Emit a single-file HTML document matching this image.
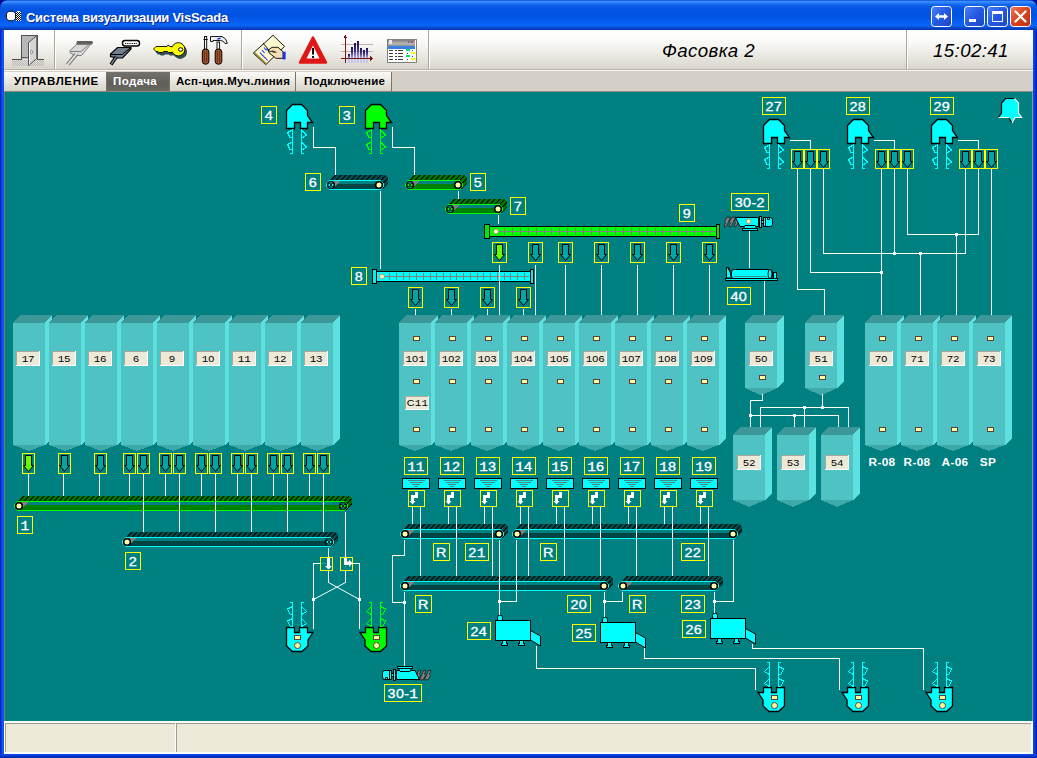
<!DOCTYPE html>
<html><head><meta charset="utf-8"><title>VisScada</title>
<style>
html,body{margin:0;padding:0;}
body{width:1037px;height:758px;overflow:hidden;position:relative;background:#00098c;font-family:"Liberation Sans",sans-serif;}
.abs{position:absolute;}
#title{left:0;top:0;width:1037px;height:30px;border-radius:8px 8px 0 0;
 background:linear-gradient(to bottom,#0a4ad8 0px,#3a8cfc 1.5px,#2a7cf6 3px,#1468ee 4.5px,#0a5ce6 6.5px,#0254e2 9px,#0052e0 16px,#065cf0 21px,#0a66f8 25px,#0856e0 27px,#0846c8 28px,#0638b0 30px);}
#title .t{position:absolute;left:26px;top:10px;color:#fff;font-weight:bold;font-size:13px;line-height:16px;letter-spacing:-0.27px;text-shadow:1px 1px 0 #0a2a90;white-space:nowrap;}
#lb{left:0;top:30px;width:4px;height:728px;background:linear-gradient(to right,#0019cf 0,#0831d9 1px,#1660ee 3px,#0848d8 4px);}
#rb{left:1033px;top:30px;width:4px;height:728px;background:linear-gradient(to right,#0a50e0 0,#0838d8 2px,#001ea0 4px);}
#bb{left:0;top:754px;width:1037px;height:4px;background:linear-gradient(to bottom,#0a50e0 0,#0838d8 2px,#001ea0 4px);}
#tool{left:4px;top:30px;width:1029px;height:40px;background:linear-gradient(to bottom,#ffffff 0%,#fbfbf9 25%,#efeee9 55%,#e1ded6 85%,#d7d4cb 100%);border-bottom:1px solid #b9b4a2;box-sizing:border-box;}
#tabs{left:4px;top:70px;width:1029px;height:22px;background:#d4d0c8;border-top:1px solid #fbfaf6;border-bottom:1px solid #8e8a80;box-sizing:border-box;}
#teal{left:4px;top:92px;width:1029px;height:629px;background:#008080;border-left:1px solid #707870;border-right:1px solid #909890;box-sizing:border-box;}
#status{left:4px;top:721px;width:1029px;height:33px;background:#fff;}
#status div{position:absolute;top:2px;height:29px;background:#ece9d8;border-top:1px solid #9d9d8f;border-left:1px solid #9d9d8f;box-sizing:border-box;}
.tab{position:absolute;top:72px;height:20px;font-weight:bold;font-size:11.5px;line-height:18px;color:#000;white-space:nowrap;box-sizing:border-box;
 background:linear-gradient(to bottom,#fbfaf7 0%,#ebe9e1 45%,#d6d3c7 100%);border-right:1px solid #77756a;border-bottom:1px solid #8a887c;}
.tab span{position:absolute;top:0;}
.sep{position:absolute;top:0;width:1px;height:39px;background:#aca899;border-right:1px solid #fff;}
svg text.lb .m{font-family:"Liberation Mono",monospace;}
svg text.lb .s{font-family:"Liberation Sans",sans-serif;letter-spacing:0.25px;}
svg text.tg .m{font-family:"Liberation Mono",monospace;}
svg text.tg .s{font-family:"Liberation Sans",sans-serif;letter-spacing:0.3px;}
svg text.sb{font-family:"Liberation Sans",sans-serif;font-weight:bold;}
.it{position:absolute;font-style:italic;font-size:18.67px;line-height:22px;color:#000;white-space:nowrap;letter-spacing:0.4px;}
</style></head><body>
<div id="title" class="abs"><div class="t">Система визуализации VisScada</div></div>
<div id="lb" class="abs"></div><div id="rb" class="abs"></div><div id="bb" class="abs"></div>
<div id="tool" class="abs">
 <div class="sep" style="left:50px"></div>
 <div class="sep" style="left:237px"></div>
 <div class="sep" style="left:424px"></div>
 <div class="sep" style="left:902px"></div>
 <div class="it" style="left:658px;top:10px">Фасовка 2</div>
 <div class="it" style="left:929px;top:10px">15:02:41</div>
</div>
<div id="tabs" class="abs"></div>
<div class="tab abs" style="left:4px;width:103px"><span style="left:10px;letter-spacing:0.65px">УПРАВЛЕНИЕ</span></div>
<div class="tab abs" style="left:107px;width:63px;color:#fff;background:linear-gradient(to bottom,#74726c,#605e58 60%,#6a6862)"><span style="left:6px;letter-spacing:0.4px">Подача</span></div>
<div class="tab abs" style="left:170px;width:126px"><span style="left:6px;letter-spacing:0.22px">Асп-ция.Муч.линия</span></div>
<div class="tab abs" style="left:296px;width:96px"><span style="left:8px;letter-spacing:0.25px">Подключение</span></div>
<div id="teal" class="abs"></div>
<div id="status" class="abs"><div style="left:1px;width:170px"></div><div style="left:172px;width:855px"></div></div>
<svg class="abs" style="left:0;top:0" width="1037" height="758" viewBox="0 0 1037 758" shape-rendering="crispEdges">
<polygon points="45,323 52,315 52,438 45,445" fill="#5ce0e0" />
<polygon points="13,323 20,315 52,315 45,323" fill="#3c9898" />
<rect x="13" y="323" width="32" height="122" fill="#4fc3c3" />
<polygon points="13,445 45,445 29.0,451" fill="#3fa8a8" />
<polygon points="81,323 88,315 88,438 81,445" fill="#5ce0e0" />
<polygon points="49,323 56,315 88,315 81,323" fill="#3c9898" />
<rect x="49" y="323" width="32" height="122" fill="#4fc3c3" />
<polygon points="49,445 81,445 65.0,451" fill="#3fa8a8" />
<polygon points="117,323 124,315 124,438 117,445" fill="#5ce0e0" />
<polygon points="85,323 92,315 124,315 117,323" fill="#3c9898" />
<rect x="85" y="323" width="32" height="122" fill="#4fc3c3" />
<polygon points="85,445 117,445 101.0,451" fill="#3fa8a8" />
<polygon points="153,323 160,315 160,438 153,445" fill="#5ce0e0" />
<polygon points="121,323 128,315 160,315 153,323" fill="#3c9898" />
<rect x="121" y="323" width="32" height="122" fill="#4fc3c3" />
<polygon points="121,445 153,445 137.0,451" fill="#3fa8a8" />
<polygon points="189,323 196,315 196,438 189,445" fill="#5ce0e0" />
<polygon points="157,323 164,315 196,315 189,323" fill="#3c9898" />
<rect x="157" y="323" width="32" height="122" fill="#4fc3c3" />
<polygon points="157,445 189,445 173.0,451" fill="#3fa8a8" />
<polygon points="225,323 232,315 232,438 225,445" fill="#5ce0e0" />
<polygon points="193,323 200,315 232,315 225,323" fill="#3c9898" />
<rect x="193" y="323" width="32" height="122" fill="#4fc3c3" />
<polygon points="193,445 225,445 209.0,451" fill="#3fa8a8" />
<polygon points="261,323 268,315 268,438 261,445" fill="#5ce0e0" />
<polygon points="229,323 236,315 268,315 261,323" fill="#3c9898" />
<rect x="229" y="323" width="32" height="122" fill="#4fc3c3" />
<polygon points="229,445 261,445 245.0,451" fill="#3fa8a8" />
<polygon points="297,323 304,315 304,438 297,445" fill="#5ce0e0" />
<polygon points="265,323 272,315 304,315 297,323" fill="#3c9898" />
<rect x="265" y="323" width="32" height="122" fill="#4fc3c3" />
<polygon points="265,445 297,445 281.0,451" fill="#3fa8a8" />
<polygon points="333,323 340,315 340,438 333,445" fill="#5ce0e0" />
<polygon points="301,323 308,315 340,315 333,323" fill="#3c9898" />
<rect x="301" y="323" width="32" height="122" fill="#4fc3c3" />
<polygon points="301,445 333,445 317.0,451" fill="#3fa8a8" />
<rect x="16" y="351" width="24" height="15" fill="#ece9d8" />
<rect x="16" y="351" width="24" height="1" fill="#aca899"/>
<rect x="16" y="351" width="1" height="15" fill="#aca899"/>
<rect x="16" y="365" width="24" height="1" fill="#ffffff"/>
<rect x="39" y="351" width="1" height="15" fill="#ffffff"/>
<text transform="translate(28.3,362) scale(1.13,1)" font-size="9.6" fill="#000" text-anchor="middle" class="tg"><tspan class="m">1</tspan><tspan class="s">7</tspan></text>
<rect x="52" y="351" width="24" height="15" fill="#ece9d8" />
<rect x="52" y="351" width="24" height="1" fill="#aca899"/>
<rect x="52" y="351" width="1" height="15" fill="#aca899"/>
<rect x="52" y="365" width="24" height="1" fill="#ffffff"/>
<rect x="75" y="351" width="1" height="15" fill="#ffffff"/>
<text transform="translate(64.3,362) scale(1.13,1)" font-size="9.6" fill="#000" text-anchor="middle" class="tg"><tspan class="m">1</tspan><tspan class="s">5</tspan></text>
<rect x="88" y="351" width="24" height="15" fill="#ece9d8" />
<rect x="88" y="351" width="24" height="1" fill="#aca899"/>
<rect x="88" y="351" width="1" height="15" fill="#aca899"/>
<rect x="88" y="365" width="24" height="1" fill="#ffffff"/>
<rect x="111" y="351" width="1" height="15" fill="#ffffff"/>
<text transform="translate(100.3,362) scale(1.13,1)" font-size="9.6" fill="#000" text-anchor="middle" class="tg"><tspan class="m">1</tspan><tspan class="s">6</tspan></text>
<rect x="124" y="351" width="24" height="15" fill="#ece9d8" />
<rect x="124" y="351" width="24" height="1" fill="#aca899"/>
<rect x="124" y="351" width="1" height="15" fill="#aca899"/>
<rect x="124" y="365" width="24" height="1" fill="#ffffff"/>
<rect x="147" y="351" width="1" height="15" fill="#ffffff"/>
<text transform="translate(136.3,362) scale(1.13,1)" font-size="9.6" fill="#000" text-anchor="middle" class="tg"><tspan class="s">6</tspan></text>
<rect x="160" y="351" width="24" height="15" fill="#ece9d8" />
<rect x="160" y="351" width="24" height="1" fill="#aca899"/>
<rect x="160" y="351" width="1" height="15" fill="#aca899"/>
<rect x="160" y="365" width="24" height="1" fill="#ffffff"/>
<rect x="183" y="351" width="1" height="15" fill="#ffffff"/>
<text transform="translate(172.3,362) scale(1.13,1)" font-size="9.6" fill="#000" text-anchor="middle" class="tg"><tspan class="s">9</tspan></text>
<rect x="196" y="351" width="24" height="15" fill="#ece9d8" />
<rect x="196" y="351" width="24" height="1" fill="#aca899"/>
<rect x="196" y="351" width="1" height="15" fill="#aca899"/>
<rect x="196" y="365" width="24" height="1" fill="#ffffff"/>
<rect x="219" y="351" width="1" height="15" fill="#ffffff"/>
<text transform="translate(208.3,362) scale(1.13,1)" font-size="9.6" fill="#000" text-anchor="middle" class="tg"><tspan class="m">1</tspan><tspan class="s">0</tspan></text>
<rect x="232" y="351" width="24" height="15" fill="#ece9d8" />
<rect x="232" y="351" width="24" height="1" fill="#aca899"/>
<rect x="232" y="351" width="1" height="15" fill="#aca899"/>
<rect x="232" y="365" width="24" height="1" fill="#ffffff"/>
<rect x="255" y="351" width="1" height="15" fill="#ffffff"/>
<text transform="translate(244.3,362) scale(1.13,1)" font-size="9.6" fill="#000" text-anchor="middle" class="tg"><tspan class="m">1</tspan><tspan class="m">1</tspan></text>
<rect x="268" y="351" width="24" height="15" fill="#ece9d8" />
<rect x="268" y="351" width="24" height="1" fill="#aca899"/>
<rect x="268" y="351" width="1" height="15" fill="#aca899"/>
<rect x="268" y="365" width="24" height="1" fill="#ffffff"/>
<rect x="291" y="351" width="1" height="15" fill="#ffffff"/>
<text transform="translate(280.3,362) scale(1.13,1)" font-size="9.6" fill="#000" text-anchor="middle" class="tg"><tspan class="m">1</tspan><tspan class="s">2</tspan></text>
<rect x="304" y="351" width="24" height="15" fill="#ece9d8" />
<rect x="304" y="351" width="24" height="1" fill="#aca899"/>
<rect x="304" y="351" width="1" height="15" fill="#aca899"/>
<rect x="304" y="365" width="24" height="1" fill="#ffffff"/>
<rect x="327" y="351" width="1" height="15" fill="#ffffff"/>
<text transform="translate(316.3,362) scale(1.13,1)" font-size="9.6" fill="#000" text-anchor="middle" class="tg"><tspan class="m">1</tspan><tspan class="s">3</tspan></text>
<polygon points="431,323 438,315 438,438 431,445" fill="#5ce0e0" />
<polygon points="399,323 406,315 438,315 431,323" fill="#3c9898" />
<rect x="399" y="323" width="32" height="122" fill="#4fc3c3" />
<polygon points="399,445 431,445 415.0,451" fill="#3fa8a8" />
<polygon points="467,323 474,315 474,438 467,445" fill="#5ce0e0" />
<polygon points="435,323 442,315 474,315 467,323" fill="#3c9898" />
<rect x="435" y="323" width="32" height="122" fill="#4fc3c3" />
<polygon points="435,445 467,445 451.0,451" fill="#3fa8a8" />
<polygon points="503,323 510,315 510,438 503,445" fill="#5ce0e0" />
<polygon points="471,323 478,315 510,315 503,323" fill="#3c9898" />
<rect x="471" y="323" width="32" height="122" fill="#4fc3c3" />
<polygon points="471,445 503,445 487.0,451" fill="#3fa8a8" />
<polygon points="539,323 546,315 546,438 539,445" fill="#5ce0e0" />
<polygon points="507,323 514,315 546,315 539,323" fill="#3c9898" />
<rect x="507" y="323" width="32" height="122" fill="#4fc3c3" />
<polygon points="507,445 539,445 523.0,451" fill="#3fa8a8" />
<polygon points="575,323 582,315 582,438 575,445" fill="#5ce0e0" />
<polygon points="543,323 550,315 582,315 575,323" fill="#3c9898" />
<rect x="543" y="323" width="32" height="122" fill="#4fc3c3" />
<polygon points="543,445 575,445 559.0,451" fill="#3fa8a8" />
<polygon points="611,323 618,315 618,438 611,445" fill="#5ce0e0" />
<polygon points="579,323 586,315 618,315 611,323" fill="#3c9898" />
<rect x="579" y="323" width="32" height="122" fill="#4fc3c3" />
<polygon points="579,445 611,445 595.0,451" fill="#3fa8a8" />
<polygon points="647,323 654,315 654,438 647,445" fill="#5ce0e0" />
<polygon points="615,323 622,315 654,315 647,323" fill="#3c9898" />
<rect x="615" y="323" width="32" height="122" fill="#4fc3c3" />
<polygon points="615,445 647,445 631.0,451" fill="#3fa8a8" />
<polygon points="683,323 690,315 690,438 683,445" fill="#5ce0e0" />
<polygon points="651,323 658,315 690,315 683,323" fill="#3c9898" />
<rect x="651" y="323" width="32" height="122" fill="#4fc3c3" />
<polygon points="651,445 683,445 667.0,451" fill="#3fa8a8" />
<polygon points="719,323 726,315 726,438 719,445" fill="#5ce0e0" />
<polygon points="687,323 694,315 726,315 719,323" fill="#3c9898" />
<rect x="687" y="323" width="32" height="122" fill="#4fc3c3" />
<polygon points="687,445 719,445 703.0,451" fill="#3fa8a8" />
<rect x="403" y="351" width="24" height="15" fill="#ece9d8" />
<rect x="403" y="351" width="24" height="1" fill="#aca899"/>
<rect x="403" y="351" width="1" height="15" fill="#aca899"/>
<rect x="403" y="365" width="24" height="1" fill="#ffffff"/>
<rect x="426" y="351" width="1" height="15" fill="#ffffff"/>
<text transform="translate(415.3,362) scale(1.13,1)" font-size="9.6" fill="#000" text-anchor="middle" class="tg"><tspan class="m">1</tspan><tspan class="s">0</tspan><tspan class="m">1</tspan></text>
<rect x="413.5" y="336.5" width="6" height="4" fill="#ffff99" stroke="#5a4040" />
<rect x="413.5" y="379.5" width="6" height="4" fill="#ffff99" stroke="#5a4040" />
<rect x="413.5" y="427.5" width="6" height="4" fill="#ffff99" stroke="#5a4040" />
<rect x="439" y="351" width="24" height="15" fill="#ece9d8" />
<rect x="439" y="351" width="24" height="1" fill="#aca899"/>
<rect x="439" y="351" width="1" height="15" fill="#aca899"/>
<rect x="439" y="365" width="24" height="1" fill="#ffffff"/>
<rect x="462" y="351" width="1" height="15" fill="#ffffff"/>
<text transform="translate(451.3,362) scale(1.13,1)" font-size="9.6" fill="#000" text-anchor="middle" class="tg"><tspan class="m">1</tspan><tspan class="s">0</tspan><tspan class="s">2</tspan></text>
<rect x="449.5" y="336.5" width="6" height="4" fill="#ffff99" stroke="#5a4040" />
<rect x="449.5" y="379.5" width="6" height="4" fill="#ffff99" stroke="#5a4040" />
<rect x="449.5" y="427.5" width="6" height="4" fill="#ffff99" stroke="#5a4040" />
<rect x="475" y="351" width="24" height="15" fill="#ece9d8" />
<rect x="475" y="351" width="24" height="1" fill="#aca899"/>
<rect x="475" y="351" width="1" height="15" fill="#aca899"/>
<rect x="475" y="365" width="24" height="1" fill="#ffffff"/>
<rect x="498" y="351" width="1" height="15" fill="#ffffff"/>
<text transform="translate(487.3,362) scale(1.13,1)" font-size="9.6" fill="#000" text-anchor="middle" class="tg"><tspan class="m">1</tspan><tspan class="s">0</tspan><tspan class="s">3</tspan></text>
<rect x="485.5" y="336.5" width="6" height="4" fill="#ffff99" stroke="#5a4040" />
<rect x="485.5" y="379.5" width="6" height="4" fill="#ffff99" stroke="#5a4040" />
<rect x="485.5" y="427.5" width="6" height="4" fill="#ffff99" stroke="#5a4040" />
<rect x="511" y="351" width="24" height="15" fill="#ece9d8" />
<rect x="511" y="351" width="24" height="1" fill="#aca899"/>
<rect x="511" y="351" width="1" height="15" fill="#aca899"/>
<rect x="511" y="365" width="24" height="1" fill="#ffffff"/>
<rect x="534" y="351" width="1" height="15" fill="#ffffff"/>
<text transform="translate(523.3,362) scale(1.13,1)" font-size="9.6" fill="#000" text-anchor="middle" class="tg"><tspan class="m">1</tspan><tspan class="s">0</tspan><tspan class="s">4</tspan></text>
<rect x="521.5" y="336.5" width="6" height="4" fill="#ffff99" stroke="#5a4040" />
<rect x="521.5" y="379.5" width="6" height="4" fill="#ffff99" stroke="#5a4040" />
<rect x="521.5" y="427.5" width="6" height="4" fill="#ffff99" stroke="#5a4040" />
<rect x="547" y="351" width="24" height="15" fill="#ece9d8" />
<rect x="547" y="351" width="24" height="1" fill="#aca899"/>
<rect x="547" y="351" width="1" height="15" fill="#aca899"/>
<rect x="547" y="365" width="24" height="1" fill="#ffffff"/>
<rect x="570" y="351" width="1" height="15" fill="#ffffff"/>
<text transform="translate(559.3,362) scale(1.13,1)" font-size="9.6" fill="#000" text-anchor="middle" class="tg"><tspan class="m">1</tspan><tspan class="s">0</tspan><tspan class="s">5</tspan></text>
<rect x="557.5" y="336.5" width="6" height="4" fill="#ffff99" stroke="#5a4040" />
<rect x="557.5" y="379.5" width="6" height="4" fill="#ffff99" stroke="#5a4040" />
<rect x="557.5" y="427.5" width="6" height="4" fill="#ffff99" stroke="#5a4040" />
<rect x="583" y="351" width="24" height="15" fill="#ece9d8" />
<rect x="583" y="351" width="24" height="1" fill="#aca899"/>
<rect x="583" y="351" width="1" height="15" fill="#aca899"/>
<rect x="583" y="365" width="24" height="1" fill="#ffffff"/>
<rect x="606" y="351" width="1" height="15" fill="#ffffff"/>
<text transform="translate(595.3,362) scale(1.13,1)" font-size="9.6" fill="#000" text-anchor="middle" class="tg"><tspan class="m">1</tspan><tspan class="s">0</tspan><tspan class="s">6</tspan></text>
<rect x="593.5" y="336.5" width="6" height="4" fill="#ffff99" stroke="#5a4040" />
<rect x="593.5" y="379.5" width="6" height="4" fill="#ffff99" stroke="#5a4040" />
<rect x="593.5" y="427.5" width="6" height="4" fill="#ffff99" stroke="#5a4040" />
<rect x="619" y="351" width="24" height="15" fill="#ece9d8" />
<rect x="619" y="351" width="24" height="1" fill="#aca899"/>
<rect x="619" y="351" width="1" height="15" fill="#aca899"/>
<rect x="619" y="365" width="24" height="1" fill="#ffffff"/>
<rect x="642" y="351" width="1" height="15" fill="#ffffff"/>
<text transform="translate(631.3,362) scale(1.13,1)" font-size="9.6" fill="#000" text-anchor="middle" class="tg"><tspan class="m">1</tspan><tspan class="s">0</tspan><tspan class="s">7</tspan></text>
<rect x="629.5" y="336.5" width="6" height="4" fill="#ffff99" stroke="#5a4040" />
<rect x="629.5" y="379.5" width="6" height="4" fill="#ffff99" stroke="#5a4040" />
<rect x="629.5" y="427.5" width="6" height="4" fill="#ffff99" stroke="#5a4040" />
<rect x="655" y="351" width="24" height="15" fill="#ece9d8" />
<rect x="655" y="351" width="24" height="1" fill="#aca899"/>
<rect x="655" y="351" width="1" height="15" fill="#aca899"/>
<rect x="655" y="365" width="24" height="1" fill="#ffffff"/>
<rect x="678" y="351" width="1" height="15" fill="#ffffff"/>
<text transform="translate(667.3,362) scale(1.13,1)" font-size="9.6" fill="#000" text-anchor="middle" class="tg"><tspan class="m">1</tspan><tspan class="s">0</tspan><tspan class="s">8</tspan></text>
<rect x="665.5" y="336.5" width="6" height="4" fill="#ffff99" stroke="#5a4040" />
<rect x="665.5" y="379.5" width="6" height="4" fill="#ffff99" stroke="#5a4040" />
<rect x="665.5" y="427.5" width="6" height="4" fill="#ffff99" stroke="#5a4040" />
<rect x="691" y="351" width="24" height="15" fill="#ece9d8" />
<rect x="691" y="351" width="24" height="1" fill="#aca899"/>
<rect x="691" y="351" width="1" height="15" fill="#aca899"/>
<rect x="691" y="365" width="24" height="1" fill="#ffffff"/>
<rect x="714" y="351" width="1" height="15" fill="#ffffff"/>
<text transform="translate(703.3,362) scale(1.13,1)" font-size="9.6" fill="#000" text-anchor="middle" class="tg"><tspan class="m">1</tspan><tspan class="s">0</tspan><tspan class="s">9</tspan></text>
<rect x="701.5" y="336.5" width="6" height="4" fill="#ffff99" stroke="#5a4040" />
<rect x="701.5" y="379.5" width="6" height="4" fill="#ffff99" stroke="#5a4040" />
<rect x="701.5" y="427.5" width="6" height="4" fill="#ffff99" stroke="#5a4040" />
<rect x="405" y="396" width="24" height="14" fill="#ece9d8" />
<rect x="405" y="396" width="24" height="1" fill="#aca899"/>
<rect x="405" y="396" width="1" height="14" fill="#aca899"/>
<rect x="405" y="409" width="24" height="1" fill="#ffffff"/>
<rect x="428" y="396" width="1" height="14" fill="#ffffff"/>
<text transform="translate(417.3,406) scale(1.13,1)" font-size="9.6" fill="#000" text-anchor="middle" class="tg"><tspan class="s">C</tspan><tspan class="m">1</tspan><tspan class="m">1</tspan></text>
<polygon points="777,323 784,315 784,381 777,388" fill="#5ce0e0" />
<polygon points="745,323 752,315 784,315 777,323" fill="#3c9898" />
<rect x="745" y="323" width="32" height="65" fill="#4fc3c3" />
<polygon points="745,388 777,388 761.0,395.5" fill="#3fa8a8" />
<polygon points="837,323 844,315 844,381 837,388" fill="#5ce0e0" />
<polygon points="805,323 812,315 844,315 837,323" fill="#3c9898" />
<rect x="805" y="323" width="32" height="65" fill="#4fc3c3" />
<polygon points="805,388 837,388 821.0,395.5" fill="#3fa8a8" />
<rect x="749" y="351" width="24" height="15" fill="#ece9d8" />
<rect x="749" y="351" width="24" height="1" fill="#aca899"/>
<rect x="749" y="351" width="1" height="15" fill="#aca899"/>
<rect x="749" y="365" width="24" height="1" fill="#ffffff"/>
<rect x="772" y="351" width="1" height="15" fill="#ffffff"/>
<text transform="translate(761.3,362) scale(1.13,1)" font-size="9.6" fill="#000" text-anchor="middle" class="tg"><tspan class="s">5</tspan><tspan class="s">0</tspan></text>
<rect x="759.5" y="336.5" width="6" height="4" fill="#ffff99" stroke="#5a4040" />
<rect x="759.5" y="375.5" width="6" height="4" fill="#ffff99" stroke="#5a4040" />
<rect x="809" y="351" width="24" height="15" fill="#ece9d8" />
<rect x="809" y="351" width="24" height="1" fill="#aca899"/>
<rect x="809" y="351" width="1" height="15" fill="#aca899"/>
<rect x="809" y="365" width="24" height="1" fill="#ffffff"/>
<rect x="832" y="351" width="1" height="15" fill="#ffffff"/>
<text transform="translate(821.3,362) scale(1.13,1)" font-size="9.6" fill="#000" text-anchor="middle" class="tg"><tspan class="s">5</tspan><tspan class="m">1</tspan></text>
<rect x="819.5" y="336.5" width="6" height="4" fill="#ffff99" stroke="#5a4040" />
<rect x="819.5" y="375.5" width="6" height="4" fill="#ffff99" stroke="#5a4040" />
<polygon points="765,435 772,427 772,493 765,500" fill="#5ce0e0" />
<polygon points="733,435 740,427 772,427 765,435" fill="#3c9898" />
<rect x="733" y="435" width="32" height="65" fill="#4fc3c3" />
<polygon points="733,500 765,500 749.0,507" fill="#3fa8a8" />
<rect x="737" y="455" width="24" height="15" fill="#ece9d8" />
<rect x="737" y="455" width="24" height="1" fill="#aca899"/>
<rect x="737" y="455" width="1" height="15" fill="#aca899"/>
<rect x="737" y="469" width="24" height="1" fill="#ffffff"/>
<rect x="760" y="455" width="1" height="15" fill="#ffffff"/>
<text transform="translate(749.3,466) scale(1.13,1)" font-size="9.6" fill="#000" text-anchor="middle" class="tg"><tspan class="s">5</tspan><tspan class="s">2</tspan></text>
<polygon points="809,435 816,427 816,493 809,500" fill="#5ce0e0" />
<polygon points="777,435 784,427 816,427 809,435" fill="#3c9898" />
<rect x="777" y="435" width="32" height="65" fill="#4fc3c3" />
<polygon points="777,500 809,500 793.0,507" fill="#3fa8a8" />
<rect x="781" y="455" width="24" height="15" fill="#ece9d8" />
<rect x="781" y="455" width="24" height="1" fill="#aca899"/>
<rect x="781" y="455" width="1" height="15" fill="#aca899"/>
<rect x="781" y="469" width="24" height="1" fill="#ffffff"/>
<rect x="804" y="455" width="1" height="15" fill="#ffffff"/>
<text transform="translate(793.3,466) scale(1.13,1)" font-size="9.6" fill="#000" text-anchor="middle" class="tg"><tspan class="s">5</tspan><tspan class="s">3</tspan></text>
<polygon points="853,435 860,427 860,493 853,500" fill="#5ce0e0" />
<polygon points="821,435 828,427 860,427 853,435" fill="#3c9898" />
<rect x="821" y="435" width="32" height="65" fill="#4fc3c3" />
<polygon points="821,500 853,500 837.0,507" fill="#3fa8a8" />
<rect x="825" y="455" width="24" height="15" fill="#ece9d8" />
<rect x="825" y="455" width="24" height="1" fill="#aca899"/>
<rect x="825" y="455" width="1" height="15" fill="#aca899"/>
<rect x="825" y="469" width="24" height="1" fill="#ffffff"/>
<rect x="848" y="455" width="1" height="15" fill="#ffffff"/>
<text transform="translate(837.3,466) scale(1.13,1)" font-size="9.6" fill="#000" text-anchor="middle" class="tg"><tspan class="s">5</tspan><tspan class="s">4</tspan></text>
<polygon points="897,323 904,315 904,438 897,445" fill="#5ce0e0" />
<polygon points="865,323 872,315 904,315 897,323" fill="#3c9898" />
<rect x="865" y="323" width="32" height="122" fill="#4fc3c3" />
<polygon points="865,445 897,445 881.0,451" fill="#3fa8a8" />
<polygon points="933,323 940,315 940,438 933,445" fill="#5ce0e0" />
<polygon points="901,323 908,315 940,315 933,323" fill="#3c9898" />
<rect x="901" y="323" width="32" height="122" fill="#4fc3c3" />
<polygon points="901,445 933,445 917.0,451" fill="#3fa8a8" />
<polygon points="969,323 976,315 976,438 969,445" fill="#5ce0e0" />
<polygon points="937,323 944,315 976,315 969,323" fill="#3c9898" />
<rect x="937" y="323" width="32" height="122" fill="#4fc3c3" />
<polygon points="937,445 969,445 953.0,451" fill="#3fa8a8" />
<polygon points="1005,323 1012,315 1012,438 1005,445" fill="#5ce0e0" />
<polygon points="973,323 980,315 1012,315 1005,323" fill="#3c9898" />
<rect x="973" y="323" width="32" height="122" fill="#4fc3c3" />
<polygon points="973,445 1005,445 989.0,451" fill="#3fa8a8" />
<rect x="869" y="351" width="24" height="15" fill="#ece9d8" />
<rect x="869" y="351" width="24" height="1" fill="#aca899"/>
<rect x="869" y="351" width="1" height="15" fill="#aca899"/>
<rect x="869" y="365" width="24" height="1" fill="#ffffff"/>
<rect x="892" y="351" width="1" height="15" fill="#ffffff"/>
<text transform="translate(881.3,362) scale(1.13,1)" font-size="9.6" fill="#000" text-anchor="middle" class="tg"><tspan class="s">7</tspan><tspan class="s">0</tspan></text>
<rect x="879.5" y="336.5" width="6" height="4" fill="#ffff99" stroke="#5a4040" />
<rect x="879.5" y="427.5" width="6" height="4" fill="#ffff99" stroke="#5a4040" />
<rect x="905" y="351" width="24" height="15" fill="#ece9d8" />
<rect x="905" y="351" width="24" height="1" fill="#aca899"/>
<rect x="905" y="351" width="1" height="15" fill="#aca899"/>
<rect x="905" y="365" width="24" height="1" fill="#ffffff"/>
<rect x="928" y="351" width="1" height="15" fill="#ffffff"/>
<text transform="translate(917.3,362) scale(1.13,1)" font-size="9.6" fill="#000" text-anchor="middle" class="tg"><tspan class="s">7</tspan><tspan class="m">1</tspan></text>
<rect x="915.5" y="336.5" width="6" height="4" fill="#ffff99" stroke="#5a4040" />
<rect x="915.5" y="427.5" width="6" height="4" fill="#ffff99" stroke="#5a4040" />
<rect x="941" y="351" width="24" height="15" fill="#ece9d8" />
<rect x="941" y="351" width="24" height="1" fill="#aca899"/>
<rect x="941" y="351" width="1" height="15" fill="#aca899"/>
<rect x="941" y="365" width="24" height="1" fill="#ffffff"/>
<rect x="964" y="351" width="1" height="15" fill="#ffffff"/>
<text transform="translate(953.3,362) scale(1.13,1)" font-size="9.6" fill="#000" text-anchor="middle" class="tg"><tspan class="s">7</tspan><tspan class="s">2</tspan></text>
<rect x="951.5" y="336.5" width="6" height="4" fill="#ffff99" stroke="#5a4040" />
<rect x="951.5" y="427.5" width="6" height="4" fill="#ffff99" stroke="#5a4040" />
<rect x="977" y="351" width="24" height="15" fill="#ece9d8" />
<rect x="977" y="351" width="24" height="1" fill="#aca899"/>
<rect x="977" y="351" width="1" height="15" fill="#aca899"/>
<rect x="977" y="365" width="24" height="1" fill="#ffffff"/>
<rect x="1000" y="351" width="1" height="15" fill="#ffffff"/>
<text transform="translate(989.3,362) scale(1.13,1)" font-size="9.6" fill="#000" text-anchor="middle" class="tg"><tspan class="s">7</tspan><tspan class="s">3</tspan></text>
<rect x="987.5" y="336.5" width="6" height="4" fill="#ffff99" stroke="#5a4040" />
<rect x="987.5" y="427.5" width="6" height="4" fill="#ffff99" stroke="#5a4040" />
<text x="882" y="466" font-size="11.8" fill="#fff" text-anchor="middle" class="sb" letter-spacing="0.3">R-08</text>
<text x="917" y="466" font-size="11.8" fill="#fff" text-anchor="middle" class="sb" letter-spacing="0.3">R-08</text>
<text x="955" y="466" font-size="11.8" fill="#fff" text-anchor="middle" class="sb" letter-spacing="0.3">A-06</text>
<text x="988" y="466" font-size="11.8" fill="#fff" text-anchor="middle" class="sb" letter-spacing="0.3">SP</text>
<rect x="492.5" y="242.5" width="14" height="20" fill="none" stroke="#ffff00" />
<polygon points="496.5,244.5 502.5,244.5 502.5,254.5 504.5,254.5 499.5,260.5 494.5,254.5 496.5,254.5" fill="#66ff00" stroke="#000" stroke-width="1" shape-rendering="geometricPrecision"/>
<rect x="528.5" y="242.5" width="14" height="20" fill="none" stroke="#ffff00" />
<polygon points="532.5,244.5 538.5,244.5 538.5,254.5 540.5,254.5 535.5,260.5 530.5,254.5 532.5,254.5" fill="#00a6a6" stroke="#000" stroke-width="1" shape-rendering="geometricPrecision"/>
<rect x="558.5" y="242.5" width="14" height="20" fill="none" stroke="#ffff00" />
<polygon points="562.5,244.5 568.5,244.5 568.5,254.5 570.5,254.5 565.5,260.5 560.5,254.5 562.5,254.5" fill="#00a6a6" stroke="#000" stroke-width="1" shape-rendering="geometricPrecision"/>
<rect x="594.5" y="242.5" width="14" height="20" fill="none" stroke="#ffff00" />
<polygon points="598.5,244.5 604.5,244.5 604.5,254.5 606.5,254.5 601.5,260.5 596.5,254.5 598.5,254.5" fill="#00a6a6" stroke="#000" stroke-width="1" shape-rendering="geometricPrecision"/>
<rect x="630.5" y="242.5" width="14" height="20" fill="none" stroke="#ffff00" />
<polygon points="634.5,244.5 640.5,244.5 640.5,254.5 642.5,254.5 637.5,260.5 632.5,254.5 634.5,254.5" fill="#00a6a6" stroke="#000" stroke-width="1" shape-rendering="geometricPrecision"/>
<rect x="666.5" y="242.5" width="14" height="20" fill="none" stroke="#ffff00" />
<polygon points="670.5,244.5 676.5,244.5 676.5,254.5 678.5,254.5 673.5,260.5 668.5,254.5 670.5,254.5" fill="#00a6a6" stroke="#000" stroke-width="1" shape-rendering="geometricPrecision"/>
<rect x="702.5" y="242.5" width="14" height="20" fill="none" stroke="#ffff00" />
<polygon points="706.5,244.5 712.5,244.5 712.5,254.5 714.5,254.5 709.5,260.5 704.5,254.5 706.5,254.5" fill="#00a6a6" stroke="#000" stroke-width="1" shape-rendering="geometricPrecision"/>
<rect x="408.5" y="287.5" width="14" height="20" fill="none" stroke="#ffff00" />
<polygon points="412.5,289.5 418.5,289.5 418.5,299.5 420.5,299.5 415.5,305.5 410.5,299.5 412.5,299.5" fill="#00a6a6" stroke="#000" stroke-width="1" shape-rendering="geometricPrecision"/>
<rect x="444.5" y="287.5" width="14" height="20" fill="none" stroke="#ffff00" />
<polygon points="448.5,289.5 454.5,289.5 454.5,299.5 456.5,299.5 451.5,305.5 446.5,299.5 448.5,299.5" fill="#00a6a6" stroke="#000" stroke-width="1" shape-rendering="geometricPrecision"/>
<rect x="480.5" y="287.5" width="14" height="20" fill="none" stroke="#ffff00" />
<polygon points="484.5,289.5 490.5,289.5 490.5,299.5 492.5,299.5 487.5,305.5 482.5,299.5 484.5,299.5" fill="#00a6a6" stroke="#000" stroke-width="1" shape-rendering="geometricPrecision"/>
<rect x="516.5" y="287.5" width="14" height="20" fill="none" stroke="#ffff00" />
<polygon points="520.5,289.5 526.5,289.5 526.5,299.5 528.5,299.5 523.5,305.5 518.5,299.5 520.5,299.5" fill="#00a6a6" stroke="#000" stroke-width="1" shape-rendering="geometricPrecision"/>
<rect x="22.5" y="453.5" width="12" height="20" fill="none" stroke="#ffff00" />
<polygon points="25.5,455.5 31.5,455.5 31.5,465.5 33.5,465.5 28.5,471.5 23.5,465.5 25.5,465.5" fill="#66ff00" stroke="#000" stroke-width="1" shape-rendering="geometricPrecision"/>
<rect x="58.5" y="453.5" width="12" height="20" fill="none" stroke="#ffff00" />
<polygon points="61.5,455.5 67.5,455.5 67.5,465.5 69.5,465.5 64.5,471.5 59.5,465.5 61.5,465.5" fill="#00a6a6" stroke="#000" stroke-width="1" shape-rendering="geometricPrecision"/>
<rect x="94.5" y="453.5" width="12" height="20" fill="none" stroke="#ffff00" />
<polygon points="97.5,455.5 103.5,455.5 103.5,465.5 105.5,465.5 100.5,471.5 95.5,465.5 97.5,465.5" fill="#00a6a6" stroke="#000" stroke-width="1" shape-rendering="geometricPrecision"/>
<rect x="123.5" y="453.5" width="12" height="20" fill="none" stroke="#ffff00" />
<polygon points="126.5,455.5 132.5,455.5 132.5,465.5 134.5,465.5 129.5,471.5 124.5,465.5 126.5,465.5" fill="#00a6a6" stroke="#000" stroke-width="1" shape-rendering="geometricPrecision"/>
<rect x="137.5" y="453.5" width="12" height="20" fill="none" stroke="#ffff00" />
<polygon points="140.5,455.5 146.5,455.5 146.5,465.5 148.5,465.5 143.5,471.5 138.5,465.5 140.5,465.5" fill="#00a6a6" stroke="#000" stroke-width="1" shape-rendering="geometricPrecision"/>
<rect x="159.5" y="453.5" width="12" height="20" fill="none" stroke="#ffff00" />
<polygon points="162.5,455.5 168.5,455.5 168.5,465.5 170.5,465.5 165.5,471.5 160.5,465.5 162.5,465.5" fill="#00a6a6" stroke="#000" stroke-width="1" shape-rendering="geometricPrecision"/>
<rect x="173.5" y="453.5" width="12" height="20" fill="none" stroke="#ffff00" />
<polygon points="176.5,455.5 182.5,455.5 182.5,465.5 184.5,465.5 179.5,471.5 174.5,465.5 176.5,465.5" fill="#00a6a6" stroke="#000" stroke-width="1" shape-rendering="geometricPrecision"/>
<rect x="195.5" y="453.5" width="12" height="20" fill="none" stroke="#ffff00" />
<polygon points="198.5,455.5 204.5,455.5 204.5,465.5 206.5,465.5 201.5,471.5 196.5,465.5 198.5,465.5" fill="#00a6a6" stroke="#000" stroke-width="1" shape-rendering="geometricPrecision"/>
<rect x="209.5" y="453.5" width="12" height="20" fill="none" stroke="#ffff00" />
<polygon points="212.5,455.5 218.5,455.5 218.5,465.5 220.5,465.5 215.5,471.5 210.5,465.5 212.5,465.5" fill="#00a6a6" stroke="#000" stroke-width="1" shape-rendering="geometricPrecision"/>
<rect x="231.5" y="453.5" width="12" height="20" fill="none" stroke="#ffff00" />
<polygon points="234.5,455.5 240.5,455.5 240.5,465.5 242.5,465.5 237.5,471.5 232.5,465.5 234.5,465.5" fill="#00a6a6" stroke="#000" stroke-width="1" shape-rendering="geometricPrecision"/>
<rect x="245.5" y="453.5" width="12" height="20" fill="none" stroke="#ffff00" />
<polygon points="248.5,455.5 254.5,455.5 254.5,465.5 256.5,465.5 251.5,471.5 246.5,465.5 248.5,465.5" fill="#00a6a6" stroke="#000" stroke-width="1" shape-rendering="geometricPrecision"/>
<rect x="267.5" y="453.5" width="12" height="20" fill="none" stroke="#ffff00" />
<polygon points="270.5,455.5 276.5,455.5 276.5,465.5 278.5,465.5 273.5,471.5 268.5,465.5 270.5,465.5" fill="#00a6a6" stroke="#000" stroke-width="1" shape-rendering="geometricPrecision"/>
<rect x="281.5" y="453.5" width="12" height="20" fill="none" stroke="#ffff00" />
<polygon points="284.5,455.5 290.5,455.5 290.5,465.5 292.5,465.5 287.5,471.5 282.5,465.5 284.5,465.5" fill="#00a6a6" stroke="#000" stroke-width="1" shape-rendering="geometricPrecision"/>
<rect x="303.5" y="453.5" width="12" height="20" fill="none" stroke="#ffff00" />
<polygon points="306.5,455.5 312.5,455.5 312.5,465.5 314.5,465.5 309.5,471.5 304.5,465.5 306.5,465.5" fill="#00a6a6" stroke="#000" stroke-width="1" shape-rendering="geometricPrecision"/>
<rect x="317.5" y="453.5" width="12" height="20" fill="none" stroke="#ffff00" />
<polygon points="320.5,455.5 326.5,455.5 326.5,465.5 328.5,465.5 323.5,471.5 318.5,465.5 320.5,465.5" fill="#00a6a6" stroke="#000" stroke-width="1" shape-rendering="geometricPrecision"/>
<rect x="791.5" y="149.5" width="12" height="19" fill="none" stroke="#ffff00" />
<polygon points="794.5,151.5 800.5,151.5 800.5,161.5 802.5,161.5 797.5,167.5 792.5,161.5 794.5,161.5" fill="#00a6a6" stroke="#000" stroke-width="1" shape-rendering="geometricPrecision"/>
<rect x="804.5" y="149.5" width="12" height="19" fill="none" stroke="#ffff00" />
<polygon points="807.5,151.5 813.5,151.5 813.5,161.5 815.5,161.5 810.5,167.5 805.5,161.5 807.5,161.5" fill="#00a6a6" stroke="#000" stroke-width="1" shape-rendering="geometricPrecision"/>
<rect x="817.5" y="149.5" width="12" height="19" fill="none" stroke="#ffff00" />
<polygon points="820.5,151.5 826.5,151.5 826.5,161.5 828.5,161.5 823.5,167.5 818.5,161.5 820.5,161.5" fill="#00a6a6" stroke="#000" stroke-width="1" shape-rendering="geometricPrecision"/>
<rect x="875.5" y="149.5" width="12" height="19" fill="none" stroke="#ffff00" />
<polygon points="878.5,151.5 884.5,151.5 884.5,161.5 886.5,161.5 881.5,167.5 876.5,161.5 878.5,161.5" fill="#00a6a6" stroke="#000" stroke-width="1" shape-rendering="geometricPrecision"/>
<rect x="888.5" y="149.5" width="12" height="19" fill="none" stroke="#ffff00" />
<polygon points="891.5,151.5 897.5,151.5 897.5,161.5 899.5,161.5 894.5,167.5 889.5,161.5 891.5,161.5" fill="#00a6a6" stroke="#000" stroke-width="1" shape-rendering="geometricPrecision"/>
<rect x="901.5" y="149.5" width="12" height="19" fill="none" stroke="#ffff00" />
<polygon points="904.5,151.5 910.5,151.5 910.5,161.5 912.5,161.5 907.5,167.5 902.5,161.5 904.5,161.5" fill="#00a6a6" stroke="#000" stroke-width="1" shape-rendering="geometricPrecision"/>
<rect x="959.5" y="149.5" width="12" height="19" fill="none" stroke="#ffff00" />
<polygon points="962.5,151.5 968.5,151.5 968.5,161.5 970.5,161.5 965.5,167.5 960.5,161.5 962.5,161.5" fill="#00a6a6" stroke="#000" stroke-width="1" shape-rendering="geometricPrecision"/>
<rect x="972.5" y="149.5" width="12" height="19" fill="none" stroke="#ffff00" />
<polygon points="975.5,151.5 981.5,151.5 981.5,161.5 983.5,161.5 978.5,167.5 973.5,161.5 975.5,161.5" fill="#00a6a6" stroke="#000" stroke-width="1" shape-rendering="geometricPrecision"/>
<rect x="985.5" y="149.5" width="12" height="19" fill="none" stroke="#ffff00" />
<polygon points="988.5,151.5 994.5,151.5 994.5,161.5 996.5,161.5 991.5,167.5 986.5,161.5 988.5,161.5" fill="#00a6a6" stroke="#000" stroke-width="1" shape-rendering="geometricPrecision"/>
<clipPath id="h326_180"><polygon points="329,180 334,175 385,175 388,178 388,183.5 383,189 381,189 381,180"/></clipPath>
<polygon points="329,180 334,175 385,175 388,178 388,183.5 383,189 381,189 381,180" fill="#005050" />
<g clip-path="url(#h326_180)" stroke="#000" stroke-width="1.05" shape-rendering="geometricPrecision"><line x1="316" y1="191" x2="332" y2="174"/><line x1="321" y1="191" x2="337" y2="174"/><line x1="326" y1="191" x2="342" y2="174"/><line x1="331" y1="191" x2="347" y2="174"/><line x1="336" y1="191" x2="352" y2="174"/><line x1="341" y1="191" x2="357" y2="174"/><line x1="346" y1="191" x2="362" y2="174"/><line x1="351" y1="191" x2="367" y2="174"/><line x1="356" y1="191" x2="372" y2="174"/><line x1="361" y1="191" x2="377" y2="174"/><line x1="366" y1="191" x2="382" y2="174"/><line x1="371" y1="191" x2="387" y2="174"/><line x1="376" y1="191" x2="392" y2="174"/><line x1="381" y1="191" x2="397" y2="174"/><line x1="386" y1="191" x2="402" y2="174"/><line x1="391" y1="191" x2="407" y2="174"/></g>
<polygon points="329.5,180.5 380.5,180.5 383.5,183.5 383.5,186.5 380.5,189.5 329.5,189.5 326.5,186.5 326.5,183.5" fill="#008080" stroke="#00ffff" stroke-width="1" shape-rendering="geometricPrecision"/>
<rect x="330" y="184" width="50" height="5" fill="#004444" />
<polygon points="333,181 341,181 335,186" fill="#808080" />
<circle cx="331" cy="185.0" r="3.3" fill="#00ffff" stroke="#000" stroke-width="1.6" shape-rendering="geometricPrecision"/>
<path d="M331 185.0 L328.6 182.6 A3.500 3.500 0 0 1 333.4 182.6 Z M331 185.0 L333.4 187.4 A3.500 3.500 0 0 1 328.6 187.4 Z" fill="#007070" shape-rendering="geometricPrecision"/>
<path d="M328.7 182.7 L333.3 187.3 M333.3 182.7 L328.7 187.3" stroke="#000" stroke-width="0.7" fill="none" shape-rendering="geometricPrecision"/>
<circle cx="379" cy="185.0" r="3.3" fill="#ffffb0" stroke="#000" stroke-width="1.6" shape-rendering="geometricPrecision"/>
<clipPath id="h405_180"><polygon points="408,180 413,175 464,175 467,178 467,183.5 462,189 460,189 460,180"/></clipPath>
<polygon points="408,180 413,175 464,175 467,178 467,183.5 462,189 460,189 460,180" fill="#007800" />
<g clip-path="url(#h405_180)" stroke="#000" stroke-width="1.05" shape-rendering="geometricPrecision"><line x1="395" y1="191" x2="411" y2="174"/><line x1="400" y1="191" x2="416" y2="174"/><line x1="405" y1="191" x2="421" y2="174"/><line x1="410" y1="191" x2="426" y2="174"/><line x1="415" y1="191" x2="431" y2="174"/><line x1="420" y1="191" x2="436" y2="174"/><line x1="425" y1="191" x2="441" y2="174"/><line x1="430" y1="191" x2="446" y2="174"/><line x1="435" y1="191" x2="451" y2="174"/><line x1="440" y1="191" x2="456" y2="174"/><line x1="445" y1="191" x2="461" y2="174"/><line x1="450" y1="191" x2="466" y2="174"/><line x1="455" y1="191" x2="471" y2="174"/><line x1="460" y1="191" x2="476" y2="174"/><line x1="465" y1="191" x2="481" y2="174"/><line x1="470" y1="191" x2="486" y2="174"/></g>
<polygon points="408.5,180.5 459.5,180.5 462.5,183.5 462.5,186.5 459.5,189.5 408.5,189.5 405.5,186.5 405.5,183.5" fill="#008080" stroke="#00ff00" stroke-width="1" shape-rendering="geometricPrecision"/>
<rect x="409" y="184" width="50" height="5" fill="#008000" />
<polygon points="412,181 420,181 414,186" fill="#808080" />
<circle cx="410" cy="185.0" r="3.3" fill="#00ff00" stroke="#000" stroke-width="1.6" shape-rendering="geometricPrecision"/>
<path d="M410 185.0 L407.6 182.6 A3.500 3.500 0 0 1 412.4 182.6 Z M410 185.0 L412.4 187.4 A3.500 3.500 0 0 1 407.6 187.4 Z" fill="#007070" shape-rendering="geometricPrecision"/>
<path d="M407.7 182.7 L412.3 187.3 M412.3 182.7 L407.7 187.3" stroke="#000" stroke-width="0.7" fill="none" shape-rendering="geometricPrecision"/>
<circle cx="458" cy="185.0" r="3.3" fill="#ffffb0" stroke="#000" stroke-width="1.6" shape-rendering="geometricPrecision"/>
<clipPath id="h445_204"><polygon points="448,204 453,199 504,199 507,202 507,207.5 502,213 500,213 500,204"/></clipPath>
<polygon points="448,204 453,199 504,199 507,202 507,207.5 502,213 500,213 500,204" fill="#007800" />
<g clip-path="url(#h445_204)" stroke="#000" stroke-width="1.05" shape-rendering="geometricPrecision"><line x1="435" y1="215" x2="451" y2="198"/><line x1="440" y1="215" x2="456" y2="198"/><line x1="445" y1="215" x2="461" y2="198"/><line x1="450" y1="215" x2="466" y2="198"/><line x1="455" y1="215" x2="471" y2="198"/><line x1="460" y1="215" x2="476" y2="198"/><line x1="465" y1="215" x2="481" y2="198"/><line x1="470" y1="215" x2="486" y2="198"/><line x1="475" y1="215" x2="491" y2="198"/><line x1="480" y1="215" x2="496" y2="198"/><line x1="485" y1="215" x2="501" y2="198"/><line x1="490" y1="215" x2="506" y2="198"/><line x1="495" y1="215" x2="511" y2="198"/><line x1="500" y1="215" x2="516" y2="198"/><line x1="505" y1="215" x2="521" y2="198"/><line x1="510" y1="215" x2="526" y2="198"/></g>
<polygon points="448.5,204.5 499.5,204.5 502.5,207.5 502.5,210.5 499.5,213.5 448.5,213.5 445.5,210.5 445.5,207.5" fill="#008080" stroke="#00ff00" stroke-width="1" shape-rendering="geometricPrecision"/>
<rect x="449" y="208" width="50" height="5" fill="#008000" />
<polygon points="452,205 460,205 454,210" fill="#808080" />
<circle cx="450" cy="209.0" r="3.3" fill="#00ff00" stroke="#000" stroke-width="1.6" shape-rendering="geometricPrecision"/>
<path d="M450 209.0 L447.6 206.6 A3.500 3.500 0 0 1 452.4 206.6 Z M450 209.0 L452.4 211.4 A3.500 3.500 0 0 1 447.6 211.4 Z" fill="#007070" shape-rendering="geometricPrecision"/>
<path d="M447.7 206.7 L452.3 211.3 M452.3 206.7 L447.7 211.3" stroke="#000" stroke-width="0.7" fill="none" shape-rendering="geometricPrecision"/>
<circle cx="498" cy="209.0" r="3.3" fill="#ffffb0" stroke="#000" stroke-width="1.6" shape-rendering="geometricPrecision"/>
<rect x="489.5" y="226.5" width="227" height="10" fill="#00ff00" stroke="#000" />
<rect x="493" y="231" width="222" height="1" fill="#808080"/>
<rect x="504" y="228" width="1" height="7" fill="#808080"/>
<rect x="512" y="228" width="1" height="7" fill="#808080"/>
<rect x="520" y="228" width="1" height="7" fill="#808080"/>
<rect x="528" y="228" width="1" height="7" fill="#808080"/>
<rect x="536" y="228" width="1" height="7" fill="#808080"/>
<rect x="544" y="228" width="1" height="7" fill="#808080"/>
<rect x="551" y="228" width="1" height="7" fill="#808080"/>
<rect x="559" y="228" width="1" height="7" fill="#808080"/>
<rect x="567" y="228" width="1" height="7" fill="#808080"/>
<rect x="575" y="228" width="1" height="7" fill="#808080"/>
<rect x="583" y="228" width="1" height="7" fill="#808080"/>
<rect x="591" y="228" width="1" height="7" fill="#808080"/>
<rect x="599" y="228" width="1" height="7" fill="#808080"/>
<rect x="607" y="228" width="1" height="7" fill="#808080"/>
<rect x="615" y="228" width="1" height="7" fill="#808080"/>
<rect x="623" y="228" width="1" height="7" fill="#808080"/>
<rect x="631" y="228" width="1" height="7" fill="#808080"/>
<rect x="639" y="228" width="1" height="7" fill="#808080"/>
<rect x="647" y="228" width="1" height="7" fill="#808080"/>
<rect x="655" y="228" width="1" height="7" fill="#808080"/>
<rect x="662" y="228" width="1" height="7" fill="#808080"/>
<rect x="670" y="228" width="1" height="7" fill="#808080"/>
<rect x="678" y="228" width="1" height="7" fill="#808080"/>
<rect x="686" y="228" width="1" height="7" fill="#808080"/>
<rect x="694" y="228" width="1" height="7" fill="#808080"/>
<rect x="702" y="228" width="1" height="7" fill="#808080"/>
<rect x="710" y="228" width="1" height="7" fill="#808080"/>
<rect x="484.5" y="224.5" width="5" height="14" fill="#00e800" stroke="#000" />
<rect x="716.5" y="224.5" width="3" height="14" fill="#00e800" stroke="#000" />
<circle cx="496" cy="231.5" r="2.5" fill="#ffffc0" stroke="#908070" stroke-width="0.8" shape-rendering="geometricPrecision"/>
<rect x="376.5" y="271.5" width="154" height="10" fill="#00ffff" stroke="#000" />
<rect x="379" y="276" width="150" height="1" fill="#808080"/>
<rect x="389" y="273" width="1" height="7" fill="#808080"/>
<rect x="396" y="273" width="1" height="7" fill="#808080"/>
<rect x="403" y="273" width="1" height="7" fill="#808080"/>
<rect x="409" y="273" width="1" height="7" fill="#808080"/>
<rect x="416" y="273" width="1" height="7" fill="#808080"/>
<rect x="423" y="273" width="1" height="7" fill="#808080"/>
<rect x="430" y="273" width="1" height="7" fill="#808080"/>
<rect x="436" y="273" width="1" height="7" fill="#808080"/>
<rect x="443" y="273" width="1" height="7" fill="#808080"/>
<rect x="450" y="273" width="1" height="7" fill="#808080"/>
<rect x="456" y="273" width="1" height="7" fill="#808080"/>
<rect x="463" y="273" width="1" height="7" fill="#808080"/>
<rect x="470" y="273" width="1" height="7" fill="#808080"/>
<rect x="477" y="273" width="1" height="7" fill="#808080"/>
<rect x="483" y="273" width="1" height="7" fill="#808080"/>
<rect x="490" y="273" width="1" height="7" fill="#808080"/>
<rect x="497" y="273" width="1" height="7" fill="#808080"/>
<rect x="504" y="273" width="1" height="7" fill="#808080"/>
<rect x="510" y="273" width="1" height="7" fill="#808080"/>
<rect x="517" y="273" width="1" height="7" fill="#808080"/>
<rect x="524" y="273" width="1" height="7" fill="#808080"/>
<rect x="372.5" y="269.5" width="4" height="14" fill="#00f0f0" stroke="#000" />
<rect x="530.5" y="269.5" width="3" height="14" fill="#00f0f0" stroke="#000" />
<circle cx="382" cy="276.5" r="2.5" fill="#ffffc0" stroke="#908070" stroke-width="0.8" shape-rendering="geometricPrecision"/>
<clipPath id="h14_501"><polygon points="17,501 22,496 349,496 352,499 352,504.5 347,510 345,510 345,501"/></clipPath>
<polygon points="17,501 22,496 349,496 352,499 352,504.5 347,510 345,510 345,501" fill="#007800" />
<g clip-path="url(#h14_501)" stroke="#000" stroke-width="1.05" shape-rendering="geometricPrecision"><line x1="4" y1="512" x2="20" y2="495"/><line x1="9" y1="512" x2="25" y2="495"/><line x1="14" y1="512" x2="30" y2="495"/><line x1="19" y1="512" x2="35" y2="495"/><line x1="24" y1="512" x2="40" y2="495"/><line x1="29" y1="512" x2="45" y2="495"/><line x1="34" y1="512" x2="50" y2="495"/><line x1="39" y1="512" x2="55" y2="495"/><line x1="44" y1="512" x2="60" y2="495"/><line x1="49" y1="512" x2="65" y2="495"/><line x1="54" y1="512" x2="70" y2="495"/><line x1="59" y1="512" x2="75" y2="495"/><line x1="64" y1="512" x2="80" y2="495"/><line x1="69" y1="512" x2="85" y2="495"/><line x1="74" y1="512" x2="90" y2="495"/><line x1="79" y1="512" x2="95" y2="495"/><line x1="84" y1="512" x2="100" y2="495"/><line x1="89" y1="512" x2="105" y2="495"/><line x1="94" y1="512" x2="110" y2="495"/><line x1="99" y1="512" x2="115" y2="495"/><line x1="104" y1="512" x2="120" y2="495"/><line x1="109" y1="512" x2="125" y2="495"/><line x1="114" y1="512" x2="130" y2="495"/><line x1="119" y1="512" x2="135" y2="495"/><line x1="124" y1="512" x2="140" y2="495"/><line x1="129" y1="512" x2="145" y2="495"/><line x1="134" y1="512" x2="150" y2="495"/><line x1="139" y1="512" x2="155" y2="495"/><line x1="144" y1="512" x2="160" y2="495"/><line x1="149" y1="512" x2="165" y2="495"/><line x1="154" y1="512" x2="170" y2="495"/><line x1="159" y1="512" x2="175" y2="495"/><line x1="164" y1="512" x2="180" y2="495"/><line x1="169" y1="512" x2="185" y2="495"/><line x1="174" y1="512" x2="190" y2="495"/><line x1="179" y1="512" x2="195" y2="495"/><line x1="184" y1="512" x2="200" y2="495"/><line x1="189" y1="512" x2="205" y2="495"/><line x1="194" y1="512" x2="210" y2="495"/><line x1="199" y1="512" x2="215" y2="495"/><line x1="204" y1="512" x2="220" y2="495"/><line x1="209" y1="512" x2="225" y2="495"/><line x1="214" y1="512" x2="230" y2="495"/><line x1="219" y1="512" x2="235" y2="495"/><line x1="224" y1="512" x2="240" y2="495"/><line x1="229" y1="512" x2="245" y2="495"/><line x1="234" y1="512" x2="250" y2="495"/><line x1="239" y1="512" x2="255" y2="495"/><line x1="244" y1="512" x2="260" y2="495"/><line x1="249" y1="512" x2="265" y2="495"/><line x1="254" y1="512" x2="270" y2="495"/><line x1="259" y1="512" x2="275" y2="495"/><line x1="264" y1="512" x2="280" y2="495"/><line x1="269" y1="512" x2="285" y2="495"/><line x1="274" y1="512" x2="290" y2="495"/><line x1="279" y1="512" x2="295" y2="495"/><line x1="284" y1="512" x2="300" y2="495"/><line x1="289" y1="512" x2="305" y2="495"/><line x1="294" y1="512" x2="310" y2="495"/><line x1="299" y1="512" x2="315" y2="495"/><line x1="304" y1="512" x2="320" y2="495"/><line x1="309" y1="512" x2="325" y2="495"/><line x1="314" y1="512" x2="330" y2="495"/><line x1="319" y1="512" x2="335" y2="495"/><line x1="324" y1="512" x2="340" y2="495"/><line x1="329" y1="512" x2="345" y2="495"/><line x1="334" y1="512" x2="350" y2="495"/><line x1="339" y1="512" x2="355" y2="495"/><line x1="344" y1="512" x2="360" y2="495"/><line x1="349" y1="512" x2="365" y2="495"/><line x1="354" y1="512" x2="370" y2="495"/><line x1="359" y1="512" x2="375" y2="495"/></g>
<polygon points="17.5,501.5 344.5,501.5 347.5,504.5 347.5,507.5 344.5,510.5 17.5,510.5 14.5,507.5 14.5,504.5" fill="#008080" stroke="#00ff00" stroke-width="1" shape-rendering="geometricPrecision"/>
<rect x="18" y="505" width="326" height="5" fill="#008000" />
<polygon points="21,502 29,502 23,507" fill="#808080" />
<circle cx="19" cy="506.0" r="3.3" fill="#ffffb0" stroke="#000" stroke-width="1.6" shape-rendering="geometricPrecision"/>
<circle cx="343" cy="506.0" r="3.3" fill="#00ff00" stroke="#000" stroke-width="1.6" shape-rendering="geometricPrecision"/>
<path d="M343 506.0 L340.6 503.6 A3.500 3.500 0 0 1 345.4 503.6 Z M343 506.0 L345.4 508.4 A3.500 3.500 0 0 1 340.6 508.4 Z" fill="#007070" shape-rendering="geometricPrecision"/>
<path d="M340.7 503.7 L345.3 508.3 M345.3 503.7 L340.7 508.3" stroke="#000" stroke-width="0.7" fill="none" shape-rendering="geometricPrecision"/>
<clipPath id="h122_537"><polygon points="125,537 130,532 335,532 338,535 338,540.5 333,546 331,546 331,537"/></clipPath>
<polygon points="125,537 130,532 335,532 338,535 338,540.5 333,546 331,546 331,537" fill="#005050" />
<g clip-path="url(#h122_537)" stroke="#000" stroke-width="1.05" shape-rendering="geometricPrecision"><line x1="112" y1="548" x2="128" y2="531"/><line x1="117" y1="548" x2="133" y2="531"/><line x1="122" y1="548" x2="138" y2="531"/><line x1="127" y1="548" x2="143" y2="531"/><line x1="132" y1="548" x2="148" y2="531"/><line x1="137" y1="548" x2="153" y2="531"/><line x1="142" y1="548" x2="158" y2="531"/><line x1="147" y1="548" x2="163" y2="531"/><line x1="152" y1="548" x2="168" y2="531"/><line x1="157" y1="548" x2="173" y2="531"/><line x1="162" y1="548" x2="178" y2="531"/><line x1="167" y1="548" x2="183" y2="531"/><line x1="172" y1="548" x2="188" y2="531"/><line x1="177" y1="548" x2="193" y2="531"/><line x1="182" y1="548" x2="198" y2="531"/><line x1="187" y1="548" x2="203" y2="531"/><line x1="192" y1="548" x2="208" y2="531"/><line x1="197" y1="548" x2="213" y2="531"/><line x1="202" y1="548" x2="218" y2="531"/><line x1="207" y1="548" x2="223" y2="531"/><line x1="212" y1="548" x2="228" y2="531"/><line x1="217" y1="548" x2="233" y2="531"/><line x1="222" y1="548" x2="238" y2="531"/><line x1="227" y1="548" x2="243" y2="531"/><line x1="232" y1="548" x2="248" y2="531"/><line x1="237" y1="548" x2="253" y2="531"/><line x1="242" y1="548" x2="258" y2="531"/><line x1="247" y1="548" x2="263" y2="531"/><line x1="252" y1="548" x2="268" y2="531"/><line x1="257" y1="548" x2="273" y2="531"/><line x1="262" y1="548" x2="278" y2="531"/><line x1="267" y1="548" x2="283" y2="531"/><line x1="272" y1="548" x2="288" y2="531"/><line x1="277" y1="548" x2="293" y2="531"/><line x1="282" y1="548" x2="298" y2="531"/><line x1="287" y1="548" x2="303" y2="531"/><line x1="292" y1="548" x2="308" y2="531"/><line x1="297" y1="548" x2="313" y2="531"/><line x1="302" y1="548" x2="318" y2="531"/><line x1="307" y1="548" x2="323" y2="531"/><line x1="312" y1="548" x2="328" y2="531"/><line x1="317" y1="548" x2="333" y2="531"/><line x1="322" y1="548" x2="338" y2="531"/><line x1="327" y1="548" x2="343" y2="531"/><line x1="332" y1="548" x2="348" y2="531"/><line x1="337" y1="548" x2="353" y2="531"/><line x1="342" y1="548" x2="358" y2="531"/></g>
<polygon points="125.5,537.5 330.5,537.5 333.5,540.5 333.5,543.5 330.5,546.5 125.5,546.5 122.5,543.5 122.5,540.5" fill="#008080" stroke="#00ffff" stroke-width="1" shape-rendering="geometricPrecision"/>
<rect x="126" y="541" width="204" height="5" fill="#004444" />
<polygon points="129,538 137,538 131,543" fill="#808080" />
<circle cx="127" cy="542.0" r="3.3" fill="#ffffb0" stroke="#000" stroke-width="1.6" shape-rendering="geometricPrecision"/>
<circle cx="329" cy="542.0" r="3.3" fill="#00ffff" stroke="#000" stroke-width="1.6" shape-rendering="geometricPrecision"/>
<path d="M329 542.0 L326.6 539.6 A3.500 3.500 0 0 1 331.4 539.6 Z M329 542.0 L331.4 544.4 A3.500 3.500 0 0 1 326.6 544.4 Z" fill="#007070" shape-rendering="geometricPrecision"/>
<path d="M326.7 539.7 L331.3 544.3 M331.3 539.7 L326.7 544.3" stroke="#000" stroke-width="0.7" fill="none" shape-rendering="geometricPrecision"/>
<clipPath id="h400_529"><polygon points="403,529 408,524 505,524 508,527 508,532.5 503,538 501,538 501,529"/></clipPath>
<polygon points="403,529 408,524 505,524 508,527 508,532.5 503,538 501,538 501,529" fill="#005050" />
<g clip-path="url(#h400_529)" stroke="#000" stroke-width="1.05" shape-rendering="geometricPrecision"><line x1="390" y1="540" x2="406" y2="523"/><line x1="395" y1="540" x2="411" y2="523"/><line x1="400" y1="540" x2="416" y2="523"/><line x1="405" y1="540" x2="421" y2="523"/><line x1="410" y1="540" x2="426" y2="523"/><line x1="415" y1="540" x2="431" y2="523"/><line x1="420" y1="540" x2="436" y2="523"/><line x1="425" y1="540" x2="441" y2="523"/><line x1="430" y1="540" x2="446" y2="523"/><line x1="435" y1="540" x2="451" y2="523"/><line x1="440" y1="540" x2="456" y2="523"/><line x1="445" y1="540" x2="461" y2="523"/><line x1="450" y1="540" x2="466" y2="523"/><line x1="455" y1="540" x2="471" y2="523"/><line x1="460" y1="540" x2="476" y2="523"/><line x1="465" y1="540" x2="481" y2="523"/><line x1="470" y1="540" x2="486" y2="523"/><line x1="475" y1="540" x2="491" y2="523"/><line x1="480" y1="540" x2="496" y2="523"/><line x1="485" y1="540" x2="501" y2="523"/><line x1="490" y1="540" x2="506" y2="523"/><line x1="495" y1="540" x2="511" y2="523"/><line x1="500" y1="540" x2="516" y2="523"/><line x1="505" y1="540" x2="521" y2="523"/><line x1="510" y1="540" x2="526" y2="523"/><line x1="515" y1="540" x2="531" y2="523"/></g>
<polygon points="403.5,529.5 500.5,529.5 503.5,532.5 503.5,535.5 500.5,538.5 403.5,538.5 400.5,535.5 400.5,532.5" fill="#008080" stroke="#00ffff" stroke-width="1" shape-rendering="geometricPrecision"/>
<rect x="404" y="533" width="96" height="5" fill="#004444" />
<polygon points="407,530 415,530 409,535" fill="#808080" />
<circle cx="405" cy="534.0" r="3.3" fill="#ffffb0" stroke="#000" stroke-width="1.6" shape-rendering="geometricPrecision"/>
<circle cx="499" cy="534.0" r="3.3" fill="#ffffb0" stroke="#000" stroke-width="1.6" shape-rendering="geometricPrecision"/>
<clipPath id="h512_529"><polygon points="515,529 520,524 739,524 742,527 742,532.5 737,538 735,538 735,529"/></clipPath>
<polygon points="515,529 520,524 739,524 742,527 742,532.5 737,538 735,538 735,529" fill="#005050" />
<g clip-path="url(#h512_529)" stroke="#000" stroke-width="1.05" shape-rendering="geometricPrecision"><line x1="502" y1="540" x2="518" y2="523"/><line x1="507" y1="540" x2="523" y2="523"/><line x1="512" y1="540" x2="528" y2="523"/><line x1="517" y1="540" x2="533" y2="523"/><line x1="522" y1="540" x2="538" y2="523"/><line x1="527" y1="540" x2="543" y2="523"/><line x1="532" y1="540" x2="548" y2="523"/><line x1="537" y1="540" x2="553" y2="523"/><line x1="542" y1="540" x2="558" y2="523"/><line x1="547" y1="540" x2="563" y2="523"/><line x1="552" y1="540" x2="568" y2="523"/><line x1="557" y1="540" x2="573" y2="523"/><line x1="562" y1="540" x2="578" y2="523"/><line x1="567" y1="540" x2="583" y2="523"/><line x1="572" y1="540" x2="588" y2="523"/><line x1="577" y1="540" x2="593" y2="523"/><line x1="582" y1="540" x2="598" y2="523"/><line x1="587" y1="540" x2="603" y2="523"/><line x1="592" y1="540" x2="608" y2="523"/><line x1="597" y1="540" x2="613" y2="523"/><line x1="602" y1="540" x2="618" y2="523"/><line x1="607" y1="540" x2="623" y2="523"/><line x1="612" y1="540" x2="628" y2="523"/><line x1="617" y1="540" x2="633" y2="523"/><line x1="622" y1="540" x2="638" y2="523"/><line x1="627" y1="540" x2="643" y2="523"/><line x1="632" y1="540" x2="648" y2="523"/><line x1="637" y1="540" x2="653" y2="523"/><line x1="642" y1="540" x2="658" y2="523"/><line x1="647" y1="540" x2="663" y2="523"/><line x1="652" y1="540" x2="668" y2="523"/><line x1="657" y1="540" x2="673" y2="523"/><line x1="662" y1="540" x2="678" y2="523"/><line x1="667" y1="540" x2="683" y2="523"/><line x1="672" y1="540" x2="688" y2="523"/><line x1="677" y1="540" x2="693" y2="523"/><line x1="682" y1="540" x2="698" y2="523"/><line x1="687" y1="540" x2="703" y2="523"/><line x1="692" y1="540" x2="708" y2="523"/><line x1="697" y1="540" x2="713" y2="523"/><line x1="702" y1="540" x2="718" y2="523"/><line x1="707" y1="540" x2="723" y2="523"/><line x1="712" y1="540" x2="728" y2="523"/><line x1="717" y1="540" x2="733" y2="523"/><line x1="722" y1="540" x2="738" y2="523"/><line x1="727" y1="540" x2="743" y2="523"/><line x1="732" y1="540" x2="748" y2="523"/><line x1="737" y1="540" x2="753" y2="523"/><line x1="742" y1="540" x2="758" y2="523"/><line x1="747" y1="540" x2="763" y2="523"/></g>
<polygon points="515.5,529.5 734.5,529.5 737.5,532.5 737.5,535.5 734.5,538.5 515.5,538.5 512.5,535.5 512.5,532.5" fill="#008080" stroke="#00ffff" stroke-width="1" shape-rendering="geometricPrecision"/>
<rect x="516" y="533" width="218" height="5" fill="#004444" />
<polygon points="519,530 527,530 521,535" fill="#808080" />
<circle cx="517" cy="534.0" r="3.3" fill="#ffffb0" stroke="#000" stroke-width="1.6" shape-rendering="geometricPrecision"/>
<circle cx="733" cy="534.0" r="3.3" fill="#ffffb0" stroke="#000" stroke-width="1.6" shape-rendering="geometricPrecision"/>
<clipPath id="h400_581"><polygon points="403,581 408,576 610,576 613,579 613,584.5 608,590 606,590 606,581"/></clipPath>
<polygon points="403,581 408,576 610,576 613,579 613,584.5 608,590 606,590 606,581" fill="#005050" />
<g clip-path="url(#h400_581)" stroke="#000" stroke-width="1.05" shape-rendering="geometricPrecision"><line x1="390" y1="592" x2="406" y2="575"/><line x1="395" y1="592" x2="411" y2="575"/><line x1="400" y1="592" x2="416" y2="575"/><line x1="405" y1="592" x2="421" y2="575"/><line x1="410" y1="592" x2="426" y2="575"/><line x1="415" y1="592" x2="431" y2="575"/><line x1="420" y1="592" x2="436" y2="575"/><line x1="425" y1="592" x2="441" y2="575"/><line x1="430" y1="592" x2="446" y2="575"/><line x1="435" y1="592" x2="451" y2="575"/><line x1="440" y1="592" x2="456" y2="575"/><line x1="445" y1="592" x2="461" y2="575"/><line x1="450" y1="592" x2="466" y2="575"/><line x1="455" y1="592" x2="471" y2="575"/><line x1="460" y1="592" x2="476" y2="575"/><line x1="465" y1="592" x2="481" y2="575"/><line x1="470" y1="592" x2="486" y2="575"/><line x1="475" y1="592" x2="491" y2="575"/><line x1="480" y1="592" x2="496" y2="575"/><line x1="485" y1="592" x2="501" y2="575"/><line x1="490" y1="592" x2="506" y2="575"/><line x1="495" y1="592" x2="511" y2="575"/><line x1="500" y1="592" x2="516" y2="575"/><line x1="505" y1="592" x2="521" y2="575"/><line x1="510" y1="592" x2="526" y2="575"/><line x1="515" y1="592" x2="531" y2="575"/><line x1="520" y1="592" x2="536" y2="575"/><line x1="525" y1="592" x2="541" y2="575"/><line x1="530" y1="592" x2="546" y2="575"/><line x1="535" y1="592" x2="551" y2="575"/><line x1="540" y1="592" x2="556" y2="575"/><line x1="545" y1="592" x2="561" y2="575"/><line x1="550" y1="592" x2="566" y2="575"/><line x1="555" y1="592" x2="571" y2="575"/><line x1="560" y1="592" x2="576" y2="575"/><line x1="565" y1="592" x2="581" y2="575"/><line x1="570" y1="592" x2="586" y2="575"/><line x1="575" y1="592" x2="591" y2="575"/><line x1="580" y1="592" x2="596" y2="575"/><line x1="585" y1="592" x2="601" y2="575"/><line x1="590" y1="592" x2="606" y2="575"/><line x1="595" y1="592" x2="611" y2="575"/><line x1="600" y1="592" x2="616" y2="575"/><line x1="605" y1="592" x2="621" y2="575"/><line x1="610" y1="592" x2="626" y2="575"/><line x1="615" y1="592" x2="631" y2="575"/><line x1="620" y1="592" x2="636" y2="575"/></g>
<polygon points="403.5,581.5 605.5,581.5 608.5,584.5 608.5,587.5 605.5,590.5 403.5,590.5 400.5,587.5 400.5,584.5" fill="#008080" stroke="#00ffff" stroke-width="1" shape-rendering="geometricPrecision"/>
<rect x="404" y="585" width="201" height="5" fill="#004444" />
<polygon points="407,582 415,582 409,587" fill="#808080" />
<circle cx="405" cy="586.0" r="3.3" fill="#ffffb0" stroke="#000" stroke-width="1.6" shape-rendering="geometricPrecision"/>
<circle cx="604" cy="586.0" r="3.3" fill="#ffffb0" stroke="#000" stroke-width="1.6" shape-rendering="geometricPrecision"/>
<clipPath id="h618_581"><polygon points="621,581 626,576 720,576 723,579 723,584.5 718,590 716,590 716,581"/></clipPath>
<polygon points="621,581 626,576 720,576 723,579 723,584.5 718,590 716,590 716,581" fill="#005050" />
<g clip-path="url(#h618_581)" stroke="#000" stroke-width="1.05" shape-rendering="geometricPrecision"><line x1="608" y1="592" x2="624" y2="575"/><line x1="613" y1="592" x2="629" y2="575"/><line x1="618" y1="592" x2="634" y2="575"/><line x1="623" y1="592" x2="639" y2="575"/><line x1="628" y1="592" x2="644" y2="575"/><line x1="633" y1="592" x2="649" y2="575"/><line x1="638" y1="592" x2="654" y2="575"/><line x1="643" y1="592" x2="659" y2="575"/><line x1="648" y1="592" x2="664" y2="575"/><line x1="653" y1="592" x2="669" y2="575"/><line x1="658" y1="592" x2="674" y2="575"/><line x1="663" y1="592" x2="679" y2="575"/><line x1="668" y1="592" x2="684" y2="575"/><line x1="673" y1="592" x2="689" y2="575"/><line x1="678" y1="592" x2="694" y2="575"/><line x1="683" y1="592" x2="699" y2="575"/><line x1="688" y1="592" x2="704" y2="575"/><line x1="693" y1="592" x2="709" y2="575"/><line x1="698" y1="592" x2="714" y2="575"/><line x1="703" y1="592" x2="719" y2="575"/><line x1="708" y1="592" x2="724" y2="575"/><line x1="713" y1="592" x2="729" y2="575"/><line x1="718" y1="592" x2="734" y2="575"/><line x1="723" y1="592" x2="739" y2="575"/><line x1="728" y1="592" x2="744" y2="575"/></g>
<polygon points="621.5,581.5 715.5,581.5 718.5,584.5 718.5,587.5 715.5,590.5 621.5,590.5 618.5,587.5 618.5,584.5" fill="#008080" stroke="#00ffff" stroke-width="1" shape-rendering="geometricPrecision"/>
<rect x="622" y="585" width="93" height="5" fill="#004444" />
<polygon points="625,582 633,582 627,587" fill="#808080" />
<circle cx="623" cy="586.0" r="3.3" fill="#ffffb0" stroke="#000" stroke-width="1.6" shape-rendering="geometricPrecision"/>
<circle cx="714" cy="586.0" r="3.3" fill="#ffffb0" stroke="#000" stroke-width="1.6" shape-rendering="geometricPrecision"/>
<polygon points="286.5,110.5 292.5,104.5 301.5,104.5 307.5,110.5 307.5,115.5 312.5,122.5 307.5,122.5 307.5,128.5 300.5,128.5 300.5,122.5 294.5,122.5 294.5,128.5 286.5,128.5" fill="#00ffff" stroke="#000" stroke-width="1.3" shape-rendering="geometricPrecision"/>
<g fill="none" stroke="#00ffff" stroke-width="1" shape-rendering="crispEdges"><path d="M292.5 129 V154 M290.0 153.5 H292.5 M301.5 129 V154 M301.5 153.5 H304.0"/><path d="M292.5 130 L287.5 132.5 L290.0 137.5 L292.5 137.5"/><path d="M301.5 130 L306.7 135.3 L301.5 138"/><path d="M292.5 142 L287.5 144.5 L290.0 149.5 L292.5 149.5"/><path d="M301.5 142 L306.7 147.3 L301.5 150"/></g>
<polygon points="365.5,110.5 371.5,104.5 380.5,104.5 386.5,110.5 386.5,115.5 391.5,122.5 386.5,122.5 386.5,128.5 379.5,128.5 379.5,122.5 373.5,122.5 373.5,128.5 365.5,128.5" fill="#00ff00" stroke="#000" stroke-width="1.3" shape-rendering="geometricPrecision"/>
<g fill="none" stroke="#00ff00" stroke-width="1" shape-rendering="crispEdges"><path d="M371.5 129 V154 M369.0 153.5 H371.5 M380.5 129 V154 M380.5 153.5 H383.0"/><path d="M371.5 130 L366.5 132.5 L369.0 137.5 L371.5 137.5"/><path d="M380.5 130 L385.7 135.3 L380.5 138"/><path d="M371.5 142 L366.5 144.5 L369.0 149.5 L371.5 149.5"/><path d="M380.5 142 L385.7 147.3 L380.5 150"/></g>
<polygon points="763.5,125.5 769.5,119.5 778.5,119.5 784.5,125.5 784.5,130.5 789.5,137.5 784.5,137.5 784.5,143.5 777.5,143.5 777.5,137.5 771.5,137.5 771.5,143.5 763.5,143.5" fill="#00ffff" stroke="#000" stroke-width="1.3" shape-rendering="geometricPrecision"/>
<g fill="none" stroke="#00ffff" stroke-width="1" shape-rendering="crispEdges"><path d="M769.5 144 V169 M767.0 168.5 H769.5 M778.5 144 V169 M778.5 168.5 H781.0"/><path d="M769.5 145 L764.5 147.5 L767.0 152.5 L769.5 152.5"/><path d="M778.5 145 L783.7 150.3 L778.5 153"/><path d="M769.5 157 L764.5 159.5 L767.0 164.5 L769.5 164.5"/><path d="M778.5 157 L783.7 162.3 L778.5 165"/></g>
<polygon points="847.5,125.5 853.5,119.5 862.5,119.5 868.5,125.5 868.5,130.5 873.5,137.5 868.5,137.5 868.5,143.5 861.5,143.5 861.5,137.5 855.5,137.5 855.5,143.5 847.5,143.5" fill="#00ffff" stroke="#000" stroke-width="1.3" shape-rendering="geometricPrecision"/>
<g fill="none" stroke="#00ffff" stroke-width="1" shape-rendering="crispEdges"><path d="M853.5 144 V169 M851.0 168.5 H853.5 M862.5 144 V169 M862.5 168.5 H865.0"/><path d="M853.5 145 L848.5 147.5 L851.0 152.5 L853.5 152.5"/><path d="M862.5 145 L867.7 150.3 L862.5 153"/><path d="M853.5 157 L848.5 159.5 L851.0 164.5 L853.5 164.5"/><path d="M862.5 157 L867.7 162.3 L862.5 165"/></g>
<polygon points="931.5,125.5 937.5,119.5 946.5,119.5 952.5,125.5 952.5,130.5 957.5,137.5 952.5,137.5 952.5,143.5 945.5,143.5 945.5,137.5 939.5,137.5 939.5,143.5 931.5,143.5" fill="#00ffff" stroke="#000" stroke-width="1.3" shape-rendering="geometricPrecision"/>
<g fill="none" stroke="#00ffff" stroke-width="1" shape-rendering="crispEdges"><path d="M937.5 144 V169 M935.0 168.5 H937.5 M946.5 144 V169 M946.5 168.5 H949.0"/><path d="M937.5 145 L932.5 147.5 L935.0 152.5 L937.5 152.5"/><path d="M946.5 145 L951.7 150.3 L946.5 153"/><path d="M937.5 157 L932.5 159.5 L935.0 164.5 L937.5 164.5"/><path d="M946.5 157 L951.7 162.3 L946.5 165"/></g>
<polygon points="286.5,627.5 294.5,627.5 294.5,632.5 299.5,632.5 299.5,627.5 307.5,627.5 307.5,632.5 313,632.5 308,640 308,646 302,651.5 292.5,651.5 286.5,646" fill="#00ffff" stroke="#000" stroke-width="1.3" shape-rendering="geometricPrecision"/>
<rect x="294.5" y="635.5" width="6" height="4" fill="#ffff99" stroke="#5a4040" />
<circle cx="297.5" cy="645.5" r="3" fill="#ffff99" stroke="#5a4040" stroke-width="1" shape-rendering="geometricPrecision"/>
<g fill="none" stroke="#00ffff" stroke-width="1" shape-rendering="crispEdges"><path d="M292.5 602 V627 M290.0 602.5 H292.5 M301.5 602 V627 M301.5 602.5 H304.0"/><path d="M292.5 606.5 L287.5 609.0 L290.0 614.0 L292.5 614.0"/><path d="M301.5 606.5 L306.7 611.8 L301.5 614.5"/><path d="M292.5 618.5 L287.5 621.0 L290.0 626.0 L292.5 626.0"/><path d="M301.5 618.5 L306.7 623.8 L301.5 626.5"/></g>
<polygon points="386.5,627.5 378.5,627.5 378.5,632.5 373.5,632.5 373.5,627.5 365.5,627.5 365.5,632.5 360,632.5 365,640 365,646 371,651.5 380.5,651.5 386.5,646" fill="#00ff00" stroke="#000" stroke-width="1.3" shape-rendering="geometricPrecision"/>
<rect x="373.5" y="635.5" width="6" height="4" fill="#ffff99" stroke="#5a4040" />
<circle cx="376.5" cy="645.5" r="3" fill="#ffff99" stroke="#5a4040" stroke-width="1" shape-rendering="geometricPrecision"/>
<g fill="none" stroke="#00ff00" stroke-width="1" shape-rendering="crispEdges" transform="translate(752,0) scale(-1,1)"><path d="M371.5 602 V627 M369.0 602.5 H371.5 M380.5 602 V627 M380.5 602.5 H383.0"/><path d="M371.5 606.5 L366.5 609.0 L369.0 614.0 L371.5 614.0"/><path d="M380.5 606.5 L385.7 611.8 L380.5 614.5"/><path d="M371.5 618.5 L366.5 621.0 L369.0 626.0 L371.5 626.0"/><path d="M380.5 618.5 L385.7 623.8 L380.5 626.5"/></g>
<polygon points="784.5,687.5 776.5,687.5 776.5,692.5 771.5,692.5 771.5,687.5 763.5,687.5 763.5,692.5 758,692.5 763,700 763,706 769,711.5 778.5,711.5 784.5,706" fill="#00ffff" stroke="#000" stroke-width="1.3" shape-rendering="geometricPrecision"/>
<rect x="771.5" y="695.5" width="6" height="4" fill="#ffff99" stroke="#5a4040" />
<circle cx="774.5" cy="705.5" r="3" fill="#ffff99" stroke="#5a4040" stroke-width="1" shape-rendering="geometricPrecision"/>
<g fill="none" stroke="#00ffff" stroke-width="1" shape-rendering="crispEdges" transform="translate(1548,0) scale(-1,1)"><path d="M769.5 662 V687 M767.0 662.5 H769.5 M778.5 662 V687 M778.5 662.5 H781.0"/><path d="M769.5 666.5 L764.5 669.0 L767.0 674.0 L769.5 674.0"/><path d="M778.5 666.5 L783.7 671.8 L778.5 674.5"/><path d="M769.5 678.5 L764.5 681.0 L767.0 686.0 L769.5 686.0"/><path d="M778.5 678.5 L783.7 683.8 L778.5 686.5"/></g>
<polygon points="868.5,687.5 860.5,687.5 860.5,692.5 855.5,692.5 855.5,687.5 847.5,687.5 847.5,692.5 842,692.5 847,700 847,706 853,711.5 862.5,711.5 868.5,706" fill="#00ffff" stroke="#000" stroke-width="1.3" shape-rendering="geometricPrecision"/>
<rect x="855.5" y="695.5" width="6" height="4" fill="#ffff99" stroke="#5a4040" />
<circle cx="858.5" cy="705.5" r="3" fill="#ffff99" stroke="#5a4040" stroke-width="1" shape-rendering="geometricPrecision"/>
<g fill="none" stroke="#00ffff" stroke-width="1" shape-rendering="crispEdges" transform="translate(1716,0) scale(-1,1)"><path d="M853.5 662 V687 M851.0 662.5 H853.5 M862.5 662 V687 M862.5 662.5 H865.0"/><path d="M853.5 666.5 L848.5 669.0 L851.0 674.0 L853.5 674.0"/><path d="M862.5 666.5 L867.7 671.8 L862.5 674.5"/><path d="M853.5 678.5 L848.5 681.0 L851.0 686.0 L853.5 686.0"/><path d="M862.5 678.5 L867.7 683.8 L862.5 686.5"/></g>
<polygon points="952.5,687.5 944.5,687.5 944.5,692.5 939.5,692.5 939.5,687.5 931.5,687.5 931.5,692.5 926,692.5 931,700 931,706 937,711.5 946.5,711.5 952.5,706" fill="#00ffff" stroke="#000" stroke-width="1.3" shape-rendering="geometricPrecision"/>
<rect x="939.5" y="695.5" width="6" height="4" fill="#ffff99" stroke="#5a4040" />
<circle cx="942.5" cy="705.5" r="3" fill="#ffff99" stroke="#5a4040" stroke-width="1" shape-rendering="geometricPrecision"/>
<g fill="none" stroke="#00ffff" stroke-width="1" shape-rendering="crispEdges" transform="translate(1884,0) scale(-1,1)"><path d="M937.5 662 V687 M935.0 662.5 H937.5 M946.5 662 V687 M946.5 662.5 H949.0"/><path d="M937.5 666.5 L932.5 669.0 L935.0 674.0 L937.5 674.0"/><path d="M946.5 666.5 L951.7 671.8 L946.5 674.5"/><path d="M937.5 678.5 L932.5 681.0 L935.0 686.0 L937.5 686.0"/><path d="M946.5 678.5 L951.7 683.8 L946.5 686.5"/></g>
<rect x="402.5" y="478.5" width="27" height="10" fill="#00ffff" stroke="#000" />
<rect x="408" y="480" width="17" height="1" fill="#408c8c"/>
<rect x="410" y="482" width="13" height="1" fill="#408c8c"/>
<rect x="412" y="484" width="8" height="1" fill="#408c8c"/>
<rect x="414" y="486" width="4" height="1" fill="#408c8c"/>
<rect x="408.5" y="490.5" width="16" height="16" fill="none" stroke="#ffff00" />
<polygon points="415,492 418,492 418,498 414,498 414,501 415.5,501 412.5,504.5 409.5,501 411,501 411,495 415,495" fill="#fff" shape-rendering="geometricPrecision"/>
<rect x="438.5" y="478.5" width="27" height="10" fill="#00ffff" stroke="#000" />
<rect x="444" y="480" width="17" height="1" fill="#408c8c"/>
<rect x="446" y="482" width="13" height="1" fill="#408c8c"/>
<rect x="448" y="484" width="8" height="1" fill="#408c8c"/>
<rect x="450" y="486" width="4" height="1" fill="#408c8c"/>
<rect x="444.5" y="490.5" width="16" height="16" fill="none" stroke="#ffff00" />
<polygon points="451,492 454,492 454,498 450,498 450,501 451.5,501 448.5,504.5 445.5,501 447,501 447,495 451,495" fill="#fff" shape-rendering="geometricPrecision"/>
<rect x="474.5" y="478.5" width="27" height="10" fill="#00ffff" stroke="#000" />
<rect x="480" y="480" width="17" height="1" fill="#408c8c"/>
<rect x="482" y="482" width="13" height="1" fill="#408c8c"/>
<rect x="484" y="484" width="8" height="1" fill="#408c8c"/>
<rect x="486" y="486" width="4" height="1" fill="#408c8c"/>
<rect x="480.5" y="490.5" width="16" height="16" fill="none" stroke="#ffff00" />
<polygon points="487,492 490,492 490,498 486,498 486,501 487.5,501 484.5,504.5 481.5,501 483,501 483,495 487,495" fill="#fff" shape-rendering="geometricPrecision"/>
<rect x="510.5" y="478.5" width="27" height="10" fill="#00ffff" stroke="#000" />
<rect x="516" y="480" width="17" height="1" fill="#408c8c"/>
<rect x="518" y="482" width="13" height="1" fill="#408c8c"/>
<rect x="520" y="484" width="8" height="1" fill="#408c8c"/>
<rect x="522" y="486" width="4" height="1" fill="#408c8c"/>
<rect x="516.5" y="490.5" width="16" height="16" fill="none" stroke="#ffff00" />
<polygon points="523,492 526,492 526,498 522,498 522,501 523.5,501 520.5,504.5 517.5,501 519,501 519,495 523,495" fill="#fff" shape-rendering="geometricPrecision"/>
<rect x="546.5" y="478.5" width="27" height="10" fill="#00ffff" stroke="#000" />
<rect x="552" y="480" width="17" height="1" fill="#408c8c"/>
<rect x="554" y="482" width="13" height="1" fill="#408c8c"/>
<rect x="556" y="484" width="8" height="1" fill="#408c8c"/>
<rect x="558" y="486" width="4" height="1" fill="#408c8c"/>
<rect x="552.5" y="490.5" width="16" height="16" fill="none" stroke="#ffff00" />
<polygon points="559,492 562,492 562,498 558,498 558,501 559.5,501 556.5,504.5 553.5,501 555,501 555,495 559,495" fill="#fff" shape-rendering="geometricPrecision"/>
<rect x="582.5" y="478.5" width="27" height="10" fill="#00ffff" stroke="#000" />
<rect x="588" y="480" width="17" height="1" fill="#408c8c"/>
<rect x="590" y="482" width="13" height="1" fill="#408c8c"/>
<rect x="592" y="484" width="8" height="1" fill="#408c8c"/>
<rect x="594" y="486" width="4" height="1" fill="#408c8c"/>
<rect x="588.5" y="490.5" width="16" height="16" fill="none" stroke="#ffff00" />
<polygon points="595,492 598,492 598,498 594,498 594,501 595.5,501 592.5,504.5 589.5,501 591,501 591,495 595,495" fill="#fff" shape-rendering="geometricPrecision"/>
<rect x="618.5" y="478.5" width="27" height="10" fill="#00ffff" stroke="#000" />
<rect x="624" y="480" width="17" height="1" fill="#408c8c"/>
<rect x="626" y="482" width="13" height="1" fill="#408c8c"/>
<rect x="628" y="484" width="8" height="1" fill="#408c8c"/>
<rect x="630" y="486" width="4" height="1" fill="#408c8c"/>
<rect x="624.5" y="490.5" width="16" height="16" fill="none" stroke="#ffff00" />
<polygon points="631,492 634,492 634,498 630,498 630,501 631.5,501 628.5,504.5 625.5,501 627,501 627,495 631,495" fill="#fff" shape-rendering="geometricPrecision"/>
<rect x="654.5" y="478.5" width="27" height="10" fill="#00ffff" stroke="#000" />
<rect x="660" y="480" width="17" height="1" fill="#408c8c"/>
<rect x="662" y="482" width="13" height="1" fill="#408c8c"/>
<rect x="664" y="484" width="8" height="1" fill="#408c8c"/>
<rect x="666" y="486" width="4" height="1" fill="#408c8c"/>
<rect x="660.5" y="490.5" width="16" height="16" fill="none" stroke="#ffff00" />
<polygon points="667,492 670,492 670,498 666,498 666,501 667.5,501 664.5,504.5 661.5,501 663,501 663,495 667,495" fill="#fff" shape-rendering="geometricPrecision"/>
<rect x="690.5" y="478.5" width="27" height="10" fill="#00ffff" stroke="#000" />
<rect x="696" y="480" width="17" height="1" fill="#408c8c"/>
<rect x="698" y="482" width="13" height="1" fill="#408c8c"/>
<rect x="700" y="484" width="8" height="1" fill="#408c8c"/>
<rect x="702" y="486" width="4" height="1" fill="#408c8c"/>
<rect x="696.5" y="490.5" width="16" height="16" fill="none" stroke="#ffff00" />
<polygon points="703,492 706,492 706,498 702,498 702,501 703.5,501 700.5,504.5 697.5,501 699,501 699,495 703,495" fill="#fff" shape-rendering="geometricPrecision"/>
<path d="M497.5 620.5 V617.5 a2.5 2.5 0 0 1 5 0 V620.5" fill="#00ffff" stroke="#000" shape-rendering="geometricPrecision"/>
<polygon points="530.5,630.5 540.5,636.0 540.5,646.0 530.5,640.0" fill="#00ffff" stroke="#000" stroke-width="1" shape-rendering="geometricPrecision"/>
<rect x="495.5" y="620.5" width="35" height="20" fill="#00ffff" stroke="#000" />
<rect x="502.5" y="640.5" width="4" height="3" fill="#00ffff" stroke="#000" />
<rect x="501.5" y="643.5" width="6" height="2" fill="#00ffff" stroke="#000" />
<rect x="503" y="641" width="3" height="3" fill="#00ffff" />
<rect x="519.5" y="640.5" width="4" height="3" fill="#00ffff" stroke="#000" />
<rect x="518.5" y="643.5" width="6" height="2" fill="#00ffff" stroke="#000" />
<rect x="520" y="641" width="3" height="3" fill="#00ffff" />
<path d="M602.5 622.5 V619.5 a2.5 2.5 0 0 1 5 0 V622.5" fill="#00ffff" stroke="#000" shape-rendering="geometricPrecision"/>
<polygon points="635.5,632.5 645.5,638.0 645.5,648.0 635.5,642.0" fill="#00ffff" stroke="#000" stroke-width="1" shape-rendering="geometricPrecision"/>
<rect x="600.5" y="622.5" width="35" height="20" fill="#00ffff" stroke="#000" />
<rect x="607.5" y="642.5" width="4" height="3" fill="#00ffff" stroke="#000" />
<rect x="606.5" y="645.5" width="6" height="2" fill="#00ffff" stroke="#000" />
<rect x="608" y="643" width="3" height="3" fill="#00ffff" />
<rect x="624.5" y="642.5" width="4" height="3" fill="#00ffff" stroke="#000" />
<rect x="623.5" y="645.5" width="6" height="2" fill="#00ffff" stroke="#000" />
<rect x="625" y="643" width="3" height="3" fill="#00ffff" />
<path d="M712.5 618.5 V615.5 a2.5 2.5 0 0 1 5 0 V618.5" fill="#00ffff" stroke="#000" shape-rendering="geometricPrecision"/>
<polygon points="745.5,628.5 755.5,634.0 755.5,644.0 745.5,638.0" fill="#00ffff" stroke="#000" stroke-width="1" shape-rendering="geometricPrecision"/>
<rect x="710.5" y="618.5" width="35" height="20" fill="#00ffff" stroke="#000" />
<rect x="717.5" y="638.5" width="4" height="3" fill="#00ffff" stroke="#000" />
<rect x="716.5" y="641.5" width="6" height="2" fill="#00ffff" stroke="#000" />
<rect x="718" y="639" width="3" height="3" fill="#00ffff" />
<rect x="734.5" y="638.5" width="4" height="3" fill="#00ffff" stroke="#000" />
<rect x="733.5" y="641.5" width="6" height="2" fill="#00ffff" stroke="#000" />
<rect x="735" y="639" width="3" height="3" fill="#00ffff" />
<rect x="320.5" y="557.5" width="12" height="13" fill="none" stroke="#ffff00" />
<rect x="340.5" y="557.5" width="12" height="13" fill="none" stroke="#ffff00" />
<rect x="321" y="563" width="6" height="1" fill="#00a8a8"/><rect x="345" y="566" width="1" height="4" fill="#00a8a8"/>
<path d="M327 558 h3 v8 h2 l-3.500 3.500 l-3.500 -3.500 h2 z" fill="#fff" shape-rendering="geometricPrecision"/>
<path d="M344 558 h3 v3.500 h2 v-2 l3.500 3.800 l-3.500 3.800 v-2 h-5 z" fill="#fff" shape-rendering="geometricPrecision"/>
<g transform="translate(382,666)" shape-rendering="geometricPrecision" stroke-width="1"><path d="M32.5 13.800 L36.7 4.300 L39.0 4.300 L37.5 8.500 L38.5 9.500 L36.0 13.800 Z" fill="#808080" stroke="#101010" stroke-width="0.7"/><path d="M37.5 13.800 L41.7 4.300 L44.0 4.300 L42.5 8.500 L43.5 9.500 L41.0 13.800 Z" fill="#808080" stroke="#101010" stroke-width="0.7"/><path d="M42.5 13.800 L46.7 4.300 L49.0 4.300 L47.5 8.500 L48.5 9.500 L46.0 13.800 Z" fill="#808080" stroke="#101010" stroke-width="0.7"/><path d="M14.5 4.5 H33 L37.5 13.5 H14.5 Z" fill="#00ffff" stroke="#000"/><path d="M2.800 4.500 H9.500 V13.500 H2.800 Q0.500 13.500 0.500 11.300 V6.700 Q0.500 4.500 2.800 4.500 Z" fill="#00ffff" stroke="#000"/><path d="M7.500 4.500 V13.500 M3.500 13.500 V11.500 H5.500 V13.500" fill="none" stroke="#000"/><rect x="9.500" y="7.500" width="2" height="3" fill="#00ffff" stroke="#000"/><rect x="11.500" y="3.500" width="2" height="11" fill="#00ffff" stroke="#000"/><path d="M16.500 2.500 H29.500 L28 5.500 H18 Z" fill="#00ffff" stroke="#000"/><rect x="15.500" y="0.500" width="15" height="2" fill="#00ffff" stroke="#000"/></g>
<g transform="translate(773,231) rotate(180)" shape-rendering="geometricPrecision" stroke-width="1"><path d="M32.5 13.800 L36.7 4.300 L39.0 4.300 L37.5 8.500 L38.5 9.500 L36.0 13.800 Z" fill="#808080" stroke="#101010" stroke-width="0.7"/><path d="M37.5 13.800 L41.7 4.300 L44.0 4.300 L42.5 8.500 L43.5 9.500 L41.0 13.800 Z" fill="#808080" stroke="#101010" stroke-width="0.7"/><path d="M42.5 13.800 L46.7 4.300 L49.0 4.300 L47.5 8.500 L48.5 9.500 L46.0 13.800 Z" fill="#808080" stroke="#101010" stroke-width="0.7"/><path d="M14.5 4.5 H33 L37.5 13.5 H14.5 Z" fill="#00ffff" stroke="#000"/><path d="M2.800 4.500 H9.500 V13.500 H2.800 Q0.500 13.500 0.500 11.300 V6.700 Q0.500 4.500 2.800 4.500 Z" fill="#00ffff" stroke="#000"/><path d="M7.500 4.500 V13.500 M3.500 13.500 V11.500 H5.500 V13.500" fill="none" stroke="#000"/><rect x="9.500" y="7.500" width="2" height="3" fill="#00ffff" stroke="#000"/><rect x="11.500" y="3.500" width="2" height="11" fill="#00ffff" stroke="#000"/><path d="M16.500 2.500 H29.500 L28 5.500 H18 Z" fill="#00ffff" stroke="#000"/><rect x="15.500" y="0.500" width="15" height="2" fill="#00ffff" stroke="#000"/><circle cx="24.5" cy="9.7" r="2.3" fill="#ffffb0" stroke="#b09080"/></g>
<g shape-rendering="geometricPrecision" fill="#00ffff" stroke="#000" stroke-width="1"><path d="M726.5 267.5 h2 l3 5 l1 5.500 h-6 z"/><path d="M728 268 l2.500 5 l0.500 4.500" fill="none"/><rect x="731.5" y="269.5" width="41" height="9" rx="2.5"/><ellipse cx="770" cy="274" rx="2" ry="4.500"/><path d="M734 276.500 H767" stroke="#409090" fill="none"/><rect x="773.5" y="272.5" width="3" height="6"/><rect x="725.5" y="278.5" width="52" height="2"/></g>
<g shape-rendering="geometricPrecision"><path d="M1005.5 98.500 H1014.5 L1018.5 103 V113 L1021.5 117.500 H1015 L1012 123 L1009 117.500 H998.500 L1001.5 113 V103 Z" fill="#00ffff"/><path d="M998.500 117.500 L1001.500 113 V103 L1005.5 98.500 H1014.5 M1009 118 L1012 123" fill="none" stroke="#000" stroke-width="1.2"/><path d="M1014.5 98.500 L1018.5 103 V113 L1021.5 117.500 H1015 L1012 123 M1009 117.500 H998.5" fill="none" stroke="#fff" stroke-width="1.2"/></g>
<rect x="313" y="127" width="1" height="21" fill="#fff"/>
<rect x="313" y="147" width="23" height="1" fill="#fff"/>
<rect x="335" y="147" width="1" height="28" fill="#fff"/>
<rect x="392" y="127" width="1" height="21" fill="#fff"/>
<rect x="392" y="147" width="23" height="1" fill="#fff"/>
<rect x="414" y="147" width="1" height="28" fill="#fff"/>
<rect x="380" y="191" width="1" height="78" fill="#fff"/>
<rect x="458" y="191" width="1" height="8" fill="#fff"/>
<rect x="498" y="215" width="1" height="9" fill="#fff"/>
<rect x="499" y="265" width="1" height="50" fill="#fff"/>
<rect x="535" y="265" width="1" height="50" fill="#fff"/>
<rect x="565" y="265" width="1" height="50" fill="#fff"/>
<rect x="601" y="265" width="1" height="50" fill="#fff"/>
<rect x="637" y="265" width="1" height="50" fill="#fff"/>
<rect x="673" y="265" width="1" height="50" fill="#fff"/>
<rect x="709" y="265" width="1" height="50" fill="#fff"/>
<rect x="415" y="309" width="1" height="6" fill="#fff"/>
<rect x="451" y="309" width="1" height="6" fill="#fff"/>
<rect x="487" y="309" width="1" height="6" fill="#fff"/>
<rect x="523" y="309" width="1" height="6" fill="#fff"/>
<rect x="28" y="474" width="1" height="22" fill="#fff"/>
<rect x="63" y="474" width="1" height="22" fill="#fff"/>
<rect x="99" y="474" width="1" height="22" fill="#fff"/>
<rect x="129" y="474" width="1" height="22" fill="#fff"/>
<rect x="143" y="474" width="1" height="58" fill="#fff"/>
<rect x="165" y="474" width="1" height="22" fill="#fff"/>
<rect x="179" y="474" width="1" height="58" fill="#fff"/>
<rect x="201" y="474" width="1" height="22" fill="#fff"/>
<rect x="215" y="474" width="1" height="58" fill="#fff"/>
<rect x="237" y="474" width="1" height="22" fill="#fff"/>
<rect x="251" y="474" width="1" height="58" fill="#fff"/>
<rect x="273" y="474" width="1" height="22" fill="#fff"/>
<rect x="287" y="474" width="1" height="58" fill="#fff"/>
<rect x="309" y="474" width="1" height="22" fill="#fff"/>
<rect x="323" y="474" width="1" height="58" fill="#fff"/>
<rect x="328" y="548" width="1" height="9" fill="#fff"/>
<rect x="345" y="512" width="1" height="45" fill="#fff"/>
<rect x="313" y="563" width="8" height="1" fill="#fff"/>
<rect x="313" y="563" width="1" height="66" fill="#fff"/>
<rect x="353" y="563" width="7" height="1" fill="#fff"/>
<rect x="359" y="563" width="1" height="66" fill="#fff"/>
<rect x="328" y="571" width="1" height="12" fill="#fff"/>
<rect x="345" y="571" width="1" height="12" fill="#fff"/>
<g stroke="#fff" stroke-width="1" shape-rendering="geometricPrecision"><line x1="328.5" y1="582.5" x2="359.5" y2="599.5"/><line x1="345.5" y1="582.5" x2="313.5" y2="599.5"/></g>
<rect x="312" y="598" width="3" height="3" fill="#fff"/>
<rect x="358" y="598" width="3" height="3" fill="#fff"/>
<rect x="412" y="507" width="1" height="17" fill="#fff"/>
<rect x="420" y="507" width="1" height="69" fill="#fff"/>
<rect x="448" y="507" width="1" height="17" fill="#fff"/>
<rect x="456" y="507" width="1" height="69" fill="#fff"/>
<rect x="484" y="507" width="1" height="17" fill="#fff"/>
<rect x="492" y="507" width="1" height="69" fill="#fff"/>
<rect x="520" y="507" width="1" height="17" fill="#fff"/>
<rect x="528" y="507" width="1" height="69" fill="#fff"/>
<rect x="556" y="507" width="1" height="17" fill="#fff"/>
<rect x="564" y="507" width="1" height="69" fill="#fff"/>
<rect x="592" y="507" width="1" height="17" fill="#fff"/>
<rect x="600" y="507" width="1" height="69" fill="#fff"/>
<rect x="628" y="507" width="1" height="17" fill="#fff"/>
<rect x="636" y="507" width="1" height="69" fill="#fff"/>
<rect x="664" y="507" width="1" height="17" fill="#fff"/>
<rect x="672" y="507" width="1" height="69" fill="#fff"/>
<rect x="700" y="507" width="1" height="17" fill="#fff"/>
<rect x="708" y="507" width="1" height="69" fill="#fff"/>
<rect x="404" y="540" width="1" height="16" fill="#fff"/>
<rect x="392" y="555" width="13" height="1" fill="#fff"/>
<rect x="392" y="555" width="1" height="48" fill="#fff"/>
<rect x="392" y="602" width="13" height="1" fill="#fff"/>
<rect x="404" y="592" width="1" height="74" fill="#fff"/>
<rect x="403" y="601" width="3" height="3" fill="#fff"/>
<rect x="499" y="540" width="1" height="75" fill="#fff"/>
<rect x="499" y="601" width="18" height="1" fill="#fff"/>
<rect x="516" y="540" width="1" height="62" fill="#fff"/>
<rect x="498" y="600" width="3" height="3" fill="#fff"/>
<rect x="604" y="592" width="1" height="25" fill="#fff"/>
<rect x="604" y="601" width="19" height="1" fill="#fff"/>
<rect x="622" y="592" width="1" height="10" fill="#fff"/>
<rect x="603" y="600" width="3" height="3" fill="#fff"/>
<rect x="714" y="592" width="1" height="21" fill="#fff"/>
<rect x="714" y="601" width="20" height="1" fill="#fff"/>
<rect x="733" y="540" width="1" height="62" fill="#fff"/>
<rect x="713" y="600" width="3" height="3" fill="#fff"/>
<rect x="536" y="646" width="1" height="23" fill="#fff"/>
<rect x="536" y="668" width="220" height="1" fill="#fff"/>
<rect x="755" y="668" width="1" height="22" fill="#fff"/>
<rect x="644" y="648" width="1" height="11" fill="#fff"/>
<rect x="644" y="658" width="196" height="1" fill="#fff"/>
<rect x="839" y="658" width="1" height="32" fill="#fff"/>
<rect x="752" y="644" width="1" height="5" fill="#fff"/>
<rect x="752" y="648" width="172" height="1" fill="#fff"/>
<rect x="923" y="648" width="1" height="42" fill="#fff"/>
<rect x="749" y="231" width="1" height="37" fill="#fff"/>
<rect x="764" y="281" width="1" height="34" fill="#fff"/>
<rect x="790" y="140" width="21" height="1" fill="#fff"/>
<rect x="810" y="140" width="1" height="10" fill="#fff"/>
<rect x="874" y="140" width="21" height="1" fill="#fff"/>
<rect x="894" y="140" width="1" height="10" fill="#fff"/>
<rect x="958" y="140" width="21" height="1" fill="#fff"/>
<rect x="978" y="140" width="1" height="10" fill="#fff"/>
<rect x="797" y="169" width="1" height="121" fill="#fff"/>
<rect x="797" y="289" width="28" height="1" fill="#fff"/>
<rect x="824" y="289" width="1" height="26" fill="#fff"/>
<rect x="810" y="169" width="1" height="104" fill="#fff"/>
<rect x="810" y="272" width="72" height="1" fill="#fff"/>
<rect x="823" y="169" width="1" height="85" fill="#fff"/>
<rect x="823" y="253" width="143" height="1" fill="#fff"/>
<rect x="881" y="169" width="1" height="146" fill="#fff"/>
<rect x="894" y="169" width="1" height="85" fill="#fff"/>
<rect x="907" y="169" width="1" height="66" fill="#fff"/>
<rect x="907" y="234" width="72" height="1" fill="#fff"/>
<rect x="965" y="169" width="1" height="85" fill="#fff"/>
<rect x="978" y="169" width="1" height="66" fill="#fff"/>
<rect x="991" y="169" width="1" height="146" fill="#fff"/>
<rect x="920" y="253" width="1" height="62" fill="#fff"/>
<rect x="956" y="234" width="1" height="81" fill="#fff"/>
<rect x="880" y="271" width="3" height="3" fill="#fff"/>
<rect x="893" y="252" width="3" height="3" fill="#fff"/>
<rect x="919" y="252" width="3" height="3" fill="#fff"/>
<rect x="955" y="233" width="3" height="3" fill="#fff"/>
<rect x="762" y="394" width="1" height="7" fill="#fff"/>
<rect x="750" y="400" width="13" height="1" fill="#fff"/>
<rect x="750" y="400" width="1" height="27" fill="#fff"/>
<rect x="750" y="415" width="89" height="1" fill="#fff"/>
<rect x="838" y="415" width="1" height="12" fill="#fff"/>
<rect x="794" y="415" width="1" height="12" fill="#fff"/>
<rect x="822" y="394" width="1" height="14" fill="#fff"/>
<rect x="760" y="407" width="1" height="20" fill="#fff"/>
<rect x="760" y="407" width="89" height="1" fill="#fff"/>
<rect x="848" y="407" width="1" height="20" fill="#fff"/>
<rect x="804" y="407" width="1" height="20" fill="#fff"/>
<rect x="749" y="414" width="3" height="3" fill="#fff"/>
<rect x="793" y="414" width="3" height="3" fill="#fff"/>
<rect x="803" y="406" width="3" height="3" fill="#fff"/>
<rect x="821" y="406" width="3" height="3" fill="#fff"/>
<rect x="261.5" y="106.5" width="15" height="17" fill="none" stroke="#ffff00" />
<text transform="translate(268.8,120) scale(1.2,1)" font-size="12" fill="#fff" stroke="#fff" stroke-width="0.3" text-anchor="middle" class="lb"><tspan class="s">4</tspan></text>
<rect x="339.5" y="106.5" width="15" height="17" fill="none" stroke="#ffff00" />
<text transform="translate(346.8,120) scale(1.2,1)" font-size="12" fill="#fff" stroke="#fff" stroke-width="0.3" text-anchor="middle" class="lb"><tspan class="s">3</tspan></text>
<rect x="305.5" y="173.5" width="15" height="17" fill="none" stroke="#ffff00" />
<text transform="translate(312.8,187) scale(1.2,1)" font-size="12" fill="#fff" stroke="#fff" stroke-width="0.3" text-anchor="middle" class="lb"><tspan class="s">6</tspan></text>
<rect x="470.5" y="173.5" width="15" height="17" fill="none" stroke="#ffff00" />
<text transform="translate(477.8,187) scale(1.2,1)" font-size="12" fill="#fff" stroke="#fff" stroke-width="0.3" text-anchor="middle" class="lb"><tspan class="s">5</tspan></text>
<rect x="510.5" y="197.5" width="15" height="17" fill="none" stroke="#ffff00" />
<text transform="translate(517.8,211) scale(1.2,1)" font-size="12" fill="#fff" stroke="#fff" stroke-width="0.3" text-anchor="middle" class="lb"><tspan class="s">7</tspan></text>
<rect x="679.5" y="204.5" width="15" height="17" fill="none" stroke="#ffff00" />
<text transform="translate(686.8,218) scale(1.2,1)" font-size="12" fill="#fff" stroke="#fff" stroke-width="0.3" text-anchor="middle" class="lb"><tspan class="s">9</tspan></text>
<rect x="351.5" y="267.5" width="15" height="17" fill="none" stroke="#ffff00" />
<text transform="translate(358.8,281) scale(1.2,1)" font-size="12" fill="#fff" stroke="#fff" stroke-width="0.3" text-anchor="middle" class="lb"><tspan class="s">8</tspan></text>
<rect x="731.5" y="193.5" width="37" height="17" fill="none" stroke="#ffff00" />
<text transform="translate(749.8,207) scale(1.2,1)" font-size="12" fill="#fff" stroke="#fff" stroke-width="0.3" text-anchor="middle" class="lb"><tspan class="s">3</tspan><tspan class="s">0</tspan><tspan class="s">-</tspan><tspan class="s">2</tspan></text>
<rect x="727.5" y="287.5" width="23" height="17" fill="none" stroke="#ffff00" />
<text transform="translate(738.8,301) scale(1.2,1)" font-size="12" fill="#fff" stroke="#fff" stroke-width="0.3" text-anchor="middle" class="lb"><tspan class="s">4</tspan><tspan class="s">0</tspan></text>
<rect x="762.5" y="97.5" width="23" height="17" fill="none" stroke="#ffff00" />
<text transform="translate(773.8,111) scale(1.2,1)" font-size="12" fill="#fff" stroke="#fff" stroke-width="0.3" text-anchor="middle" class="lb"><tspan class="s">2</tspan><tspan class="s">7</tspan></text>
<rect x="846.5" y="97.5" width="23" height="17" fill="none" stroke="#ffff00" />
<text transform="translate(857.8,111) scale(1.2,1)" font-size="12" fill="#fff" stroke="#fff" stroke-width="0.3" text-anchor="middle" class="lb"><tspan class="s">2</tspan><tspan class="s">8</tspan></text>
<rect x="930.5" y="97.5" width="23" height="17" fill="none" stroke="#ffff00" />
<text transform="translate(941.8,111) scale(1.2,1)" font-size="12" fill="#fff" stroke="#fff" stroke-width="0.3" text-anchor="middle" class="lb"><tspan class="s">2</tspan><tspan class="s">9</tspan></text>
<rect x="17.5" y="516.5" width="15" height="17" fill="none" stroke="#ffff00" />
<text transform="translate(24.8,530) scale(1.2,1)" font-size="12" fill="#fff" stroke="#fff" stroke-width="0.3" text-anchor="middle" class="lb"><tspan class="m">1</tspan></text>
<rect x="125.5" y="552.5" width="15" height="17" fill="none" stroke="#ffff00" />
<text transform="translate(132.8,566) scale(1.2,1)" font-size="12" fill="#fff" stroke="#fff" stroke-width="0.3" text-anchor="middle" class="lb"><tspan class="s">2</tspan></text>
<rect x="404.5" y="457.5" width="23" height="17" fill="none" stroke="#ffff00" />
<text transform="translate(415.8,471) scale(1.2,1)" font-size="12" fill="#fff" stroke="#fff" stroke-width="0.3" text-anchor="middle" class="lb"><tspan class="m">1</tspan><tspan class="m">1</tspan></text>
<rect x="440.5" y="457.5" width="23" height="17" fill="none" stroke="#ffff00" />
<text transform="translate(451.8,471) scale(1.2,1)" font-size="12" fill="#fff" stroke="#fff" stroke-width="0.3" text-anchor="middle" class="lb"><tspan class="m">1</tspan><tspan class="s">2</tspan></text>
<rect x="476.5" y="457.5" width="23" height="17" fill="none" stroke="#ffff00" />
<text transform="translate(487.8,471) scale(1.2,1)" font-size="12" fill="#fff" stroke="#fff" stroke-width="0.3" text-anchor="middle" class="lb"><tspan class="m">1</tspan><tspan class="s">3</tspan></text>
<rect x="512.5" y="457.5" width="23" height="17" fill="none" stroke="#ffff00" />
<text transform="translate(523.8,471) scale(1.2,1)" font-size="12" fill="#fff" stroke="#fff" stroke-width="0.3" text-anchor="middle" class="lb"><tspan class="m">1</tspan><tspan class="s">4</tspan></text>
<rect x="548.5" y="457.5" width="23" height="17" fill="none" stroke="#ffff00" />
<text transform="translate(559.8,471) scale(1.2,1)" font-size="12" fill="#fff" stroke="#fff" stroke-width="0.3" text-anchor="middle" class="lb"><tspan class="m">1</tspan><tspan class="s">5</tspan></text>
<rect x="584.5" y="457.5" width="23" height="17" fill="none" stroke="#ffff00" />
<text transform="translate(595.8,471) scale(1.2,1)" font-size="12" fill="#fff" stroke="#fff" stroke-width="0.3" text-anchor="middle" class="lb"><tspan class="m">1</tspan><tspan class="s">6</tspan></text>
<rect x="620.5" y="457.5" width="23" height="17" fill="none" stroke="#ffff00" />
<text transform="translate(631.8,471) scale(1.2,1)" font-size="12" fill="#fff" stroke="#fff" stroke-width="0.3" text-anchor="middle" class="lb"><tspan class="m">1</tspan><tspan class="s">7</tspan></text>
<rect x="656.5" y="457.5" width="23" height="17" fill="none" stroke="#ffff00" />
<text transform="translate(667.8,471) scale(1.2,1)" font-size="12" fill="#fff" stroke="#fff" stroke-width="0.3" text-anchor="middle" class="lb"><tspan class="m">1</tspan><tspan class="s">8</tspan></text>
<rect x="692.5" y="457.5" width="23" height="17" fill="none" stroke="#ffff00" />
<text transform="translate(703.8,471) scale(1.2,1)" font-size="12" fill="#fff" stroke="#fff" stroke-width="0.3" text-anchor="middle" class="lb"><tspan class="m">1</tspan><tspan class="s">9</tspan></text>
<rect x="433.5" y="543.5" width="16" height="17" fill="none" stroke="#ffff00" />
<text transform="translate(441.3,557) scale(1.2,1)" font-size="12" fill="#fff" stroke="#fff" stroke-width="0.3" text-anchor="middle" class="lb"><tspan class="s">R</tspan></text>
<rect x="465.5" y="543.5" width="23" height="17" fill="none" stroke="#ffff00" />
<text transform="translate(476.8,557) scale(1.2,1)" font-size="12" fill="#fff" stroke="#fff" stroke-width="0.3" text-anchor="middle" class="lb"><tspan class="s">2</tspan><tspan class="m">1</tspan></text>
<rect x="540.5" y="543.5" width="16" height="17" fill="none" stroke="#ffff00" />
<text transform="translate(548.3,557) scale(1.2,1)" font-size="12" fill="#fff" stroke="#fff" stroke-width="0.3" text-anchor="middle" class="lb"><tspan class="s">R</tspan></text>
<rect x="681.5" y="543.5" width="23" height="17" fill="none" stroke="#ffff00" />
<text transform="translate(692.8,557) scale(1.2,1)" font-size="12" fill="#fff" stroke="#fff" stroke-width="0.3" text-anchor="middle" class="lb"><tspan class="s">2</tspan><tspan class="s">2</tspan></text>
<rect x="415.5" y="595.5" width="16" height="17" fill="none" stroke="#ffff00" />
<text transform="translate(423.3,609) scale(1.2,1)" font-size="12" fill="#fff" stroke="#fff" stroke-width="0.3" text-anchor="middle" class="lb"><tspan class="s">R</tspan></text>
<rect x="567.5" y="595.5" width="23" height="17" fill="none" stroke="#ffff00" />
<text transform="translate(578.8,609) scale(1.2,1)" font-size="12" fill="#fff" stroke="#fff" stroke-width="0.3" text-anchor="middle" class="lb"><tspan class="s">2</tspan><tspan class="s">0</tspan></text>
<rect x="629.5" y="595.5" width="16" height="17" fill="none" stroke="#ffff00" />
<text transform="translate(637.3,609) scale(1.2,1)" font-size="12" fill="#fff" stroke="#fff" stroke-width="0.3" text-anchor="middle" class="lb"><tspan class="s">R</tspan></text>
<rect x="681.5" y="595.5" width="23" height="17" fill="none" stroke="#ffff00" />
<text transform="translate(692.8,609) scale(1.2,1)" font-size="12" fill="#fff" stroke="#fff" stroke-width="0.3" text-anchor="middle" class="lb"><tspan class="s">2</tspan><tspan class="s">3</tspan></text>
<rect x="467.5" y="622.5" width="23" height="17" fill="none" stroke="#ffff00" />
<text transform="translate(478.8,636) scale(1.2,1)" font-size="12" fill="#fff" stroke="#fff" stroke-width="0.3" text-anchor="middle" class="lb"><tspan class="s">2</tspan><tspan class="s">4</tspan></text>
<rect x="572.5" y="624.5" width="23" height="17" fill="none" stroke="#ffff00" />
<text transform="translate(583.8,638) scale(1.2,1)" font-size="12" fill="#fff" stroke="#fff" stroke-width="0.3" text-anchor="middle" class="lb"><tspan class="s">2</tspan><tspan class="s">5</tspan></text>
<rect x="682.5" y="620.5" width="23" height="17" fill="none" stroke="#ffff00" />
<text transform="translate(693.8,634) scale(1.2,1)" font-size="12" fill="#fff" stroke="#fff" stroke-width="0.3" text-anchor="middle" class="lb"><tspan class="s">2</tspan><tspan class="s">6</tspan></text>
<rect x="384.5" y="684.5" width="37" height="17" fill="none" stroke="#ffff00" />
<text transform="translate(402.8,698) scale(1.2,1)" font-size="12" fill="#fff" stroke="#fff" stroke-width="0.3" text-anchor="middle" class="lb"><tspan class="s">3</tspan><tspan class="s">0</tspan><tspan class="s">-</tspan><tspan class="m">1</tspan></text>
<g shape-rendering="crispEdges">
<pattern id="dith" width="2" height="2" patternUnits="userSpaceOnUse"><rect x="0" y="0" width="1" height="1" fill="#b8b8b8"/><rect x="1" y="1" width="1" height="1" fill="#b8b8b8"/></pattern>
<rect x="12" y="60" width="32" height="6" fill="url(#dith)"/>
<rect x="21" y="35" width="17" height="24" fill="#b8b8b8"/>
<path d="M21.5 59 V35.5 H37.500 V59" fill="none" stroke="#505050"/>
<rect x="12" y="59" width="10" height="1" fill="#505050"/><rect x="37" y="59" width="7" height="1" fill="#505050"/>
<rect x="22" y="57" width="6" height="1" fill="#606060"/>
</g>
<g shape-rendering="geometricPrecision"><path d="M28.5 42.5 L36.800 35.500 V58.500 L28.500 65.500 Z" fill="#d4d4d4" stroke="#505050"/><path d="M29.500 43 V64.500" stroke="#fff" fill="none"/><ellipse cx="31.5" cy="52" rx="1" ry="1.600" fill="#f0f0f0" stroke="#707070" stroke-width="0.7"/></g>
<g shape-rendering="geometricPrecision"><path d="M77 41 H91 Q93.500 41 93 43 L91 45 H76 Z" fill="#606060"/><path d="M76.500 44.500 H90.500 L81.500 55.500 H74 L70 52.500 V50.500 Z" fill="#d8d8d8" stroke="#808080"/><path d="M70 51.500 H81 L89 44.500" fill="none" stroke="#808080"/><path d="M75 53.500 L66.500 64 M78 54.500 L69 65" fill="none" stroke="#808080" stroke-width="1.2"/><path d="M76.500 54 L67.800 64.500" fill="none" stroke="#e4e4e4" stroke-width="1.3"/></g>
<g shape-rendering="geometricPrecision"><rect x="122.500" y="40.500" width="17" height="5.500" rx="2.500" fill="#fff" stroke="#000" stroke-width="1.4"/><path d="M125 43.500 H137.500" stroke="#000" stroke-width="1.2" stroke-dasharray="1 0.800" fill="none"/><path d="M117.500 47.500 H131 L131 49 L122.500 58 H116 L110.500 56.500 V54 Z" fill="#708090" stroke="#000" stroke-width="1.2"/><path d="M111 54.500 H122 L130.500 47.800" fill="none" stroke="#000"/><path d="M116.500 56.500 L111 64.500" fill="none" stroke="#000" stroke-width="3.400"/><path d="M116.500 56.500 L111.300 64" fill="none" stroke="#708090" stroke-width="1.400"/></g>
<g shape-rendering="geometricPrecision"><g transform="translate(1.8,2.600)" fill="#2f4f4f"><circle cx="178.300" cy="49.300" r="7"/><path d="M153.500 49 L156 46.500 H172 V53 H168 L167 52 H163 L162 53 H159 L158 52 H156 Z"/></g><path d="M153.500 49 L156 46.500 H167 L168 45 L170 46.500 H172 V52.500 H168.500 L167.500 51.500 H163.500 L162.500 52.500 H159 L158 51.500 H156 Z" fill="#ffff00" stroke="#000" stroke-width="0.9"/><circle cx="178.300" cy="49.300" r="6.600" fill="#ffff00" stroke="#000" stroke-width="0.9"/><rect x="170.500" y="47.300" width="3" height="4.400" fill="#ffff00"/><ellipse cx="180.600" cy="49.500" rx="2.200" ry="1.800" fill="#e8e8e8" stroke="#000" stroke-width="0.9"/></g>
<g shape-rendering="geometricPrecision"><rect x="204.500" y="36.500" width="2.200" height="13" fill="#f4f4f4" stroke="#000" stroke-width="0.9"/><path d="M203.500 39.500 H207.700" stroke="#000" fill="none"/><rect x="202.300" y="49" width="6.600" height="15.200" rx="3" fill="#a0522d" stroke="#000" stroke-width="1"/><path d="M204.500 51 V62 M206.700 51 V62" stroke="#5a2a10" stroke-width="0.8" fill="none"/><rect x="217" y="42" width="2.600" height="8" fill="#f4f4f4" stroke="#000" stroke-width="0.9"/><path d="M210.500 36.500 H222 Q226.500 38 227.300 43.300 L225 43.500 Q223.500 40.500 220.500 40.500 H213 V41.500 H210.500 Z" fill="#f0f0f0" stroke="#000" stroke-width="0.9"/><path d="M216.500 39.500 L218.500 37.800 H221.500 L219.500 39.500 Z" fill="#2030ff"/><rect x="215.200" y="49" width="6.600" height="15.200" rx="3" fill="#a0522d" stroke="#000" stroke-width="1"/><path d="M217.400 51 V62 M219.600 51 V62" stroke="#5a2a10" stroke-width="0.8" fill="none"/></g>
<g shape-rendering="geometricPrecision"><path d="M273 35.300 L284.500 46.400 L265.700 64.700 L253.200 53.100 Z" fill="#fffacd" stroke="#000" stroke-width="0.9"/><path d="M253.200 53.100 L265.700 64.700 L267 63.400 L254.500 51.800 Z" fill="#8b7d3a"/><path d="M263 43 L273.500 55.500" stroke="#000" stroke-width="0.9" fill="none"/><path d="M264 47.500 L266.500 50.500 M262 50 L264.500 53 M260 52.500 L262.500 55.500 M262.500 55 L265 58 M265 57.500 L267.500 60.500 M266.500 48.500 L268 50.500" stroke="#1030ff" stroke-width="1.100" fill="none"/><path d="M268.500 50 L272 47.300 H278 L283 51.800 V58.300 H276 L273 56 L269 52.800 Z" fill="#f5deb3" stroke="#000" stroke-width="0.9"/><path d="M268.500 51 L276.500 52.300 M272.500 50.500 Q273.500 53.500 275 51.500" stroke="#000" stroke-width="0.8" fill="none"/><rect x="283" y="51.700" width="2.600" height="7.700" fill="#1030ff"/></g>
<defs><filter id="blr" x="-20%" y="-20%" width="140%" height="140%"><feGaussianBlur stdDeviation="0.7"/></filter></defs>
<g shape-rendering="geometricPrecision"><path d="M313 37.500 L326 62.500 H300 Z" fill="#e01818" stroke="#e01818" stroke-width="2.500" stroke-linejoin="round" filter="url(#blr)"/><path d="M313 45.500 L319.500 58.400 H306.500 Z" fill="#fff"/><rect x="312.100" y="48" width="1.900" height="6.600" fill="#000"/><rect x="312.100" y="56" width="1.900" height="2" fill="#000"/></g>
<defs><linearGradient id="barg" x1="0" y1="0" x2="0" y2="1"><stop offset="0" stop-color="#1a1060"/><stop offset="0.5" stop-color="#40308a"/><stop offset="1" stop-color="#b0a8d8"/></linearGradient></defs>
<g shape-rendering="crispEdges"><rect x="341" y="44" width="32" height="1" fill="#c4aeae"/><rect x="341" y="51" width="32" height="1" fill="#c4aeae"/>
<rect x="348" y="54" width="2" height="4" fill="url(#barg)"/><rect x="348" y="59" width="2" height="4" fill="#c8c4e8"/>
<rect x="351" y="47" width="2" height="11" fill="url(#barg)"/><rect x="351" y="59" width="2" height="4" fill="#c8c4e8"/>
<rect x="354" y="43" width="2" height="15" fill="url(#barg)"/><rect x="354" y="59" width="2" height="4" fill="#c8c4e8"/>
<rect x="357" y="41" width="2" height="17" fill="url(#barg)"/><rect x="357" y="59" width="2" height="4" fill="#c8c4e8"/>
<rect x="360" y="48" width="2" height="10" fill="url(#barg)"/><rect x="360" y="59" width="2" height="4" fill="#c8c4e8"/>
<rect x="363" y="50" width="2" height="8" fill="url(#barg)"/><rect x="363" y="59" width="2" height="4" fill="#c8c4e8"/>
<rect x="366" y="48" width="2" height="10" fill="url(#barg)"/><rect x="366" y="59" width="2" height="4" fill="#c8c4e8"/>
<rect x="345" y="36" width="1" height="27" fill="#701818"/><rect x="341" y="58" width="31" height="1" fill="#701818"/><path d="M343.500 38 L345.500 35 L347.500 38 Z M370 56 L373 58.500 L370 61 Z" fill="#701818"/></g>
<defs><linearGradient id="wtg" x1="0" y1="0" x2="0" y2="1"><stop offset="0" stop-color="#808080"/><stop offset="0.6" stop-color="#b8b8b8"/><stop offset="1" stop-color="#909090"/></linearGradient></defs>
<g shape-rendering="crispEdges"><rect x="387" y="39" width="29" height="23" fill="#fff" stroke="#808080"/><rect x="388" y="40" width="27" height="6" fill="url(#wtg)"/><rect x="388" y="46" width="27" height="3" fill="#3a80e0"/><rect x="389" y="40" width="3" height="4" fill="#e8e8e8"/><rect x="411" y="41" width="2" height="2" fill="#d04040"/><rect x="408" y="41" width="2" height="2" fill="#6080a0"/>
<rect x="389" y="50" width="4" height="1" fill="#404040"/><rect x="395" y="50" width="2" height="1" fill="#404040"/><rect x="398" y="50" width="5" height="1" fill="#404040"/>
<rect x="406" y="49" width="4" height="2" fill="#00e080"/><rect x="412" y="50" width="1" height="1" fill="#404040"/>
<rect x="389" y="53" width="4" height="1" fill="#404040"/><rect x="395" y="53" width="2" height="1" fill="#404040"/><rect x="398" y="53" width="5" height="1" fill="#404040"/>
<rect x="411" y="52" width="4" height="2" fill="#ffff00"/><rect x="407" y="53" width="1" height="1" fill="#404040"/>
<rect x="389" y="56" width="4" height="1" fill="#404040"/><rect x="395" y="56" width="2" height="1" fill="#404040"/><rect x="398" y="56" width="5" height="1" fill="#404040"/>
<rect x="406" y="55" width="4" height="2" fill="#00e080"/><rect x="412" y="56" width="1" height="1" fill="#404040"/>
<rect x="389" y="59" width="4" height="1" fill="#404040"/><rect x="395" y="59" width="2" height="1" fill="#404040"/><rect x="398" y="59" width="5" height="1" fill="#404040"/>
<rect x="411" y="58" width="4" height="2" fill="#ffff00"/><rect x="407" y="59" width="1" height="1" fill="#404040"/>
</g>
<pattern id="chk" width="2" height="2" patternUnits="userSpaceOnUse"><rect x="0" y="0" width="2" height="2" fill="#000"/><rect x="0" y="0" width="1" height="1" fill="#fff"/><rect x="1" y="1" width="1" height="1" fill="#fff"/></pattern>
<rect x="16" y="12" width="5" height="9" fill="url(#chk)" shape-rendering="crispEdges"/><rect x="17" y="11" width="3" height="1" fill="#fff" shape-rendering="crispEdges"/>
<g shape-rendering="geometricPrecision"><path d="M8.800 11.300 H13.200 L15.500 13.600 V18.400 L13.200 20.700 H8.800 L6.500 18.400 V13.600 Z" fill="#fff" stroke="#000" stroke-width="0.9"/></g>
<defs><linearGradient id="bbg" x1="0" y1="0" x2="1" y2="1"><stop offset="0" stop-color="#4a82f8"/><stop offset="0.5" stop-color="#2458e0"/><stop offset="1" stop-color="#1c48c8"/></linearGradient><linearGradient id="rbg" x1="0" y1="0" x2="1" y2="1"><stop offset="0" stop-color="#ee7a58"/><stop offset="0.5" stop-color="#d8431e"/><stop offset="1" stop-color="#b83010"/></linearGradient></defs>
<g shape-rendering="geometricPrecision">
<rect x="931.5" y="6.500" width="20" height="20" rx="3" fill="url(#bbg)" stroke="#fff" stroke-width="1"/>
<path d="M935 16.500 l4 -3.500 v2.300 h5 v-2.300 l4 3.500 l-4 3.500 v-2.300 h-5 v2.300 z" fill="#fff"/>
<rect x="964.5" y="6.500" width="20" height="20" rx="3" fill="url(#bbg)" stroke="#fff" stroke-width="1"/>
<rect x="969" y="19" width="7" height="3" fill="#fff"/>
<rect x="987.5" y="6.500" width="20" height="20" rx="3" fill="url(#bbg)" stroke="#fff" stroke-width="1"/>
<path d="M992 11 h11 v11 h-11 z M993 14 v7 h9 v-7 z" fill="#fff" fill-rule="evenodd"/>
<rect x="1010.5" y="6.500" width="20" height="20" rx="3" fill="url(#rbg)" stroke="#fff" stroke-width="1"/>
<path d="M1015.5 11.500 L1025.5 21.500 M1025.5 11.500 L1015.5 21.500" stroke="#fff" stroke-width="2.200" stroke-linecap="round" fill="none"/>
</g>
</svg>
</body></html>
